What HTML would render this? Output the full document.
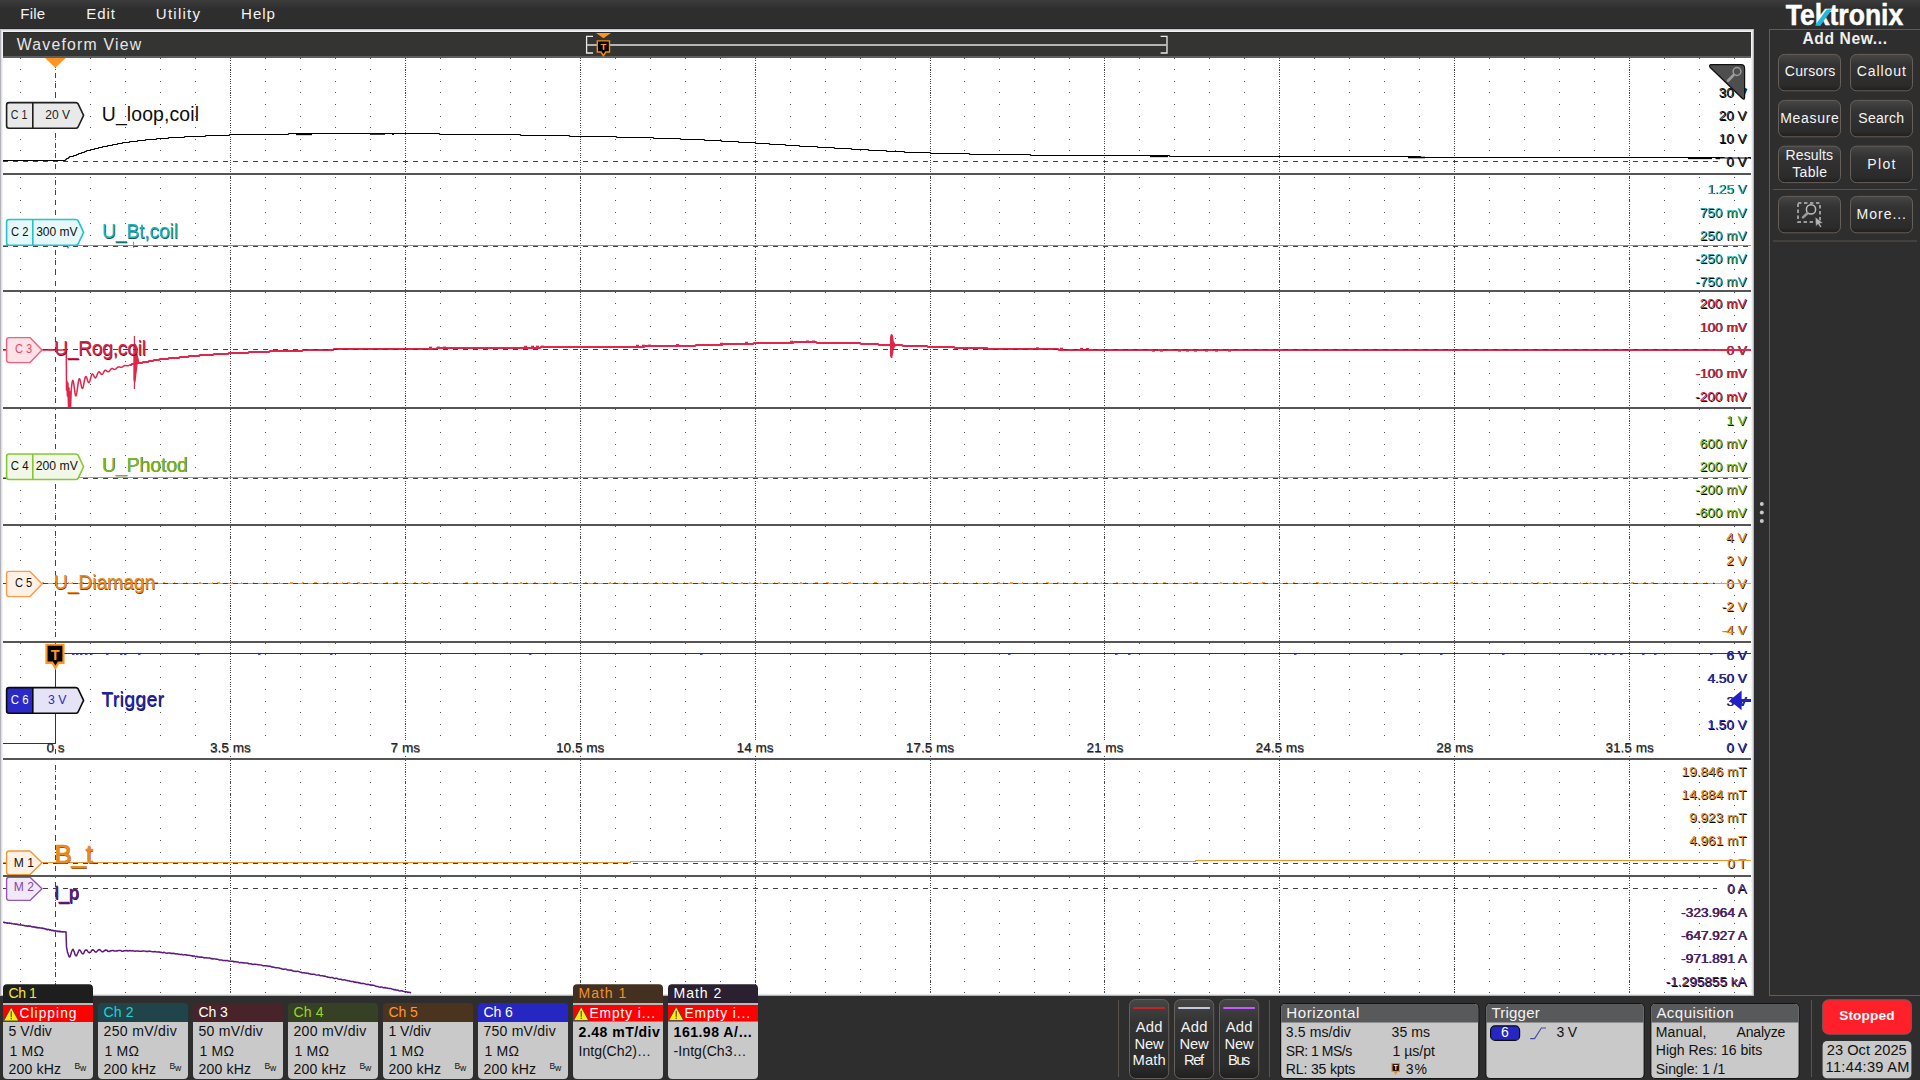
<!DOCTYPE html>
<html lang="en"><head><meta charset="utf-8"><title>Tektronix Waveform View</title>
<style>html,body{margin:0;padding:0;background:#2e2e2e;overflow:hidden}svg{display:block}text{font-family:'Liberation Sans', Arial, sans-serif;white-space:pre}</style></head><body>
<svg width="1920" height="1080" viewBox="0 0 1920 1080">
<defs>
<linearGradient id="btn" x1="0" y1="0" x2="0" y2="1"><stop offset="0" stop-color="#464646"/><stop offset="0.3" stop-color="#333333"/><stop offset="0.85" stop-color="#2b2b2b"/><stop offset="1" stop-color="#1f1f1f"/></linearGradient>
<linearGradient id="menu" x1="0" y1="0" x2="0" y2="1"><stop offset="0" stop-color="#3b3b3b"/><stop offset="0.32" stop-color="#2e2e2e"/><stop offset="1" stop-color="#2e2e2e"/></linearGradient>
<clipPath id="plotclip"><rect x="3" y="58" width="1748" height="936"/></clipPath>
<clipPath id="sc0"><rect x="3" y="58" width="1748" height="115"/></clipPath>
<clipPath id="sc1"><rect x="3" y="175" width="1748" height="115"/></clipPath>
<clipPath id="sc2"><rect x="3" y="292" width="1748" height="115"/></clipPath>
<clipPath id="sc3"><rect x="3" y="409" width="1748" height="115"/></clipPath>
<clipPath id="sc4"><rect x="3" y="526" width="1748" height="115"/></clipPath>
<clipPath id="sc5"><rect x="3" y="643" width="1748" height="115"/></clipPath>
<clipPath id="sc6"><rect x="3" y="760" width="1748" height="115"/></clipPath>
<clipPath id="sc7"><rect x="3" y="877" width="1748" height="117"/></clipPath>
</defs>
<rect x="0" y="0" width="1920" height="1080" fill="#2e2e2e"/>
<rect x="0" y="0" width="1920" height="29" fill="url(#menu)"/>
<g shape-rendering="crispEdges">
<rect x="0" y="28" width="1754" height="1" fill="#262626"/>
<rect x="0" y="29" width="1754" height="967" fill="#b2b2b8"/>
<rect x="1" y="30" width="1752" height="965" fill="#dfe1e4"/>
<rect x="2" y="31" width="1750" height="964" fill="#f1f3f5"/>
<rect x="0" y="29" width="1754" height="1" fill="#c8c8cc"/>
<rect x="3" y="32" width="1748" height="24" fill="#343432"/>
<rect x="3" y="32" width="1748" height="1" fill="#2a2a28"/>
<rect x="3" y="56" width="1748" height="2" fill="#5d5e60"/>
<rect x="3" y="58" width="1748" height="936" fill="#ffffff"/>
<rect x="3" y="994" width="1748" height="1" fill="#e4e6e8"/>
</g>
<g shape-rendering="crispEdges" clip-path="url(#plotclip)">
<line x1="20.02" y1="58.5" x2="1751" y2="58.5" stroke="#4a4a4a" stroke-width="1" stroke-dasharray="1 33.980"/>
<line x1="20.02" y1="69.5" x2="1751" y2="69.5" stroke="#4a4a4a" stroke-width="1" stroke-dasharray="1 33.980"/>
<line x1="20.02" y1="81.5" x2="1751" y2="81.5" stroke="#4a4a4a" stroke-width="1" stroke-dasharray="1 33.980"/>
<line x1="20.02" y1="92.5" x2="1751" y2="92.5" stroke="#4a4a4a" stroke-width="1" stroke-dasharray="1 33.980"/>
<line x1="20.02" y1="104.5" x2="1751" y2="104.5" stroke="#4a4a4a" stroke-width="1" stroke-dasharray="1 33.980"/>
<line x1="20.02" y1="116.5" x2="1751" y2="116.5" stroke="#4a4a4a" stroke-width="1" stroke-dasharray="1 33.980"/>
<line x1="20.02" y1="127.5" x2="1751" y2="127.5" stroke="#4a4a4a" stroke-width="1" stroke-dasharray="1 33.980"/>
<line x1="20.02" y1="139.5" x2="1751" y2="139.5" stroke="#4a4a4a" stroke-width="1" stroke-dasharray="1 33.980"/>
<line x1="20.02" y1="150.5" x2="1751" y2="150.5" stroke="#4a4a4a" stroke-width="1" stroke-dasharray="1 33.980"/>
<line x1="20.02" y1="177.5" x2="1751" y2="177.5" stroke="#4a4a4a" stroke-width="1" stroke-dasharray="1 33.980"/>
<line x1="20.02" y1="188.5" x2="1751" y2="188.5" stroke="#4a4a4a" stroke-width="1" stroke-dasharray="1 33.980"/>
<line x1="20.02" y1="200.5" x2="1751" y2="200.5" stroke="#4a4a4a" stroke-width="1" stroke-dasharray="1 33.980"/>
<line x1="20.02" y1="212.5" x2="1751" y2="212.5" stroke="#4a4a4a" stroke-width="1" stroke-dasharray="1 33.980"/>
<line x1="20.02" y1="223.5" x2="1751" y2="223.5" stroke="#4a4a4a" stroke-width="1" stroke-dasharray="1 33.980"/>
<line x1="20.02" y1="235.5" x2="1751" y2="235.5" stroke="#4a4a4a" stroke-width="1" stroke-dasharray="1 33.980"/>
<line x1="20.02" y1="258.5" x2="1751" y2="258.5" stroke="#4a4a4a" stroke-width="1" stroke-dasharray="1 33.980"/>
<line x1="20.02" y1="269.5" x2="1751" y2="269.5" stroke="#4a4a4a" stroke-width="1" stroke-dasharray="1 33.980"/>
<line x1="20.02" y1="281.5" x2="1751" y2="281.5" stroke="#4a4a4a" stroke-width="1" stroke-dasharray="1 33.980"/>
<line x1="20.02" y1="292.5" x2="1751" y2="292.5" stroke="#4a4a4a" stroke-width="1" stroke-dasharray="1 33.980"/>
<line x1="20.02" y1="303.5" x2="1751" y2="303.5" stroke="#4a4a4a" stroke-width="1" stroke-dasharray="1 33.980"/>
<line x1="20.02" y1="315.5" x2="1751" y2="315.5" stroke="#4a4a4a" stroke-width="1" stroke-dasharray="1 33.980"/>
<line x1="20.02" y1="326.5" x2="1751" y2="326.5" stroke="#4a4a4a" stroke-width="1" stroke-dasharray="1 33.980"/>
<line x1="20.02" y1="338.5" x2="1751" y2="338.5" stroke="#4a4a4a" stroke-width="1" stroke-dasharray="1 33.980"/>
<line x1="20.02" y1="361.5" x2="1751" y2="361.5" stroke="#4a4a4a" stroke-width="1" stroke-dasharray="1 33.980"/>
<line x1="20.02" y1="373.5" x2="1751" y2="373.5" stroke="#4a4a4a" stroke-width="1" stroke-dasharray="1 33.980"/>
<line x1="20.02" y1="384.5" x2="1751" y2="384.5" stroke="#4a4a4a" stroke-width="1" stroke-dasharray="1 33.980"/>
<line x1="20.02" y1="396.5" x2="1751" y2="396.5" stroke="#4a4a4a" stroke-width="1" stroke-dasharray="1 33.980"/>
<line x1="20.02" y1="409.5" x2="1751" y2="409.5" stroke="#4a4a4a" stroke-width="1" stroke-dasharray="1 33.980"/>
<line x1="20.02" y1="420.5" x2="1751" y2="420.5" stroke="#4a4a4a" stroke-width="1" stroke-dasharray="1 33.980"/>
<line x1="20.02" y1="432.5" x2="1751" y2="432.5" stroke="#4a4a4a" stroke-width="1" stroke-dasharray="1 33.980"/>
<line x1="20.02" y1="444.5" x2="1751" y2="444.5" stroke="#4a4a4a" stroke-width="1" stroke-dasharray="1 33.980"/>
<line x1="20.02" y1="455.5" x2="1751" y2="455.5" stroke="#4a4a4a" stroke-width="1" stroke-dasharray="1 33.980"/>
<line x1="20.02" y1="467.5" x2="1751" y2="467.5" stroke="#4a4a4a" stroke-width="1" stroke-dasharray="1 33.980"/>
<line x1="20.02" y1="490.5" x2="1751" y2="490.5" stroke="#4a4a4a" stroke-width="1" stroke-dasharray="1 33.980"/>
<line x1="20.02" y1="501.5" x2="1751" y2="501.5" stroke="#4a4a4a" stroke-width="1" stroke-dasharray="1 33.980"/>
<line x1="20.02" y1="513.5" x2="1751" y2="513.5" stroke="#4a4a4a" stroke-width="1" stroke-dasharray="1 33.980"/>
<line x1="20.02" y1="526.5" x2="1751" y2="526.5" stroke="#4a4a4a" stroke-width="1" stroke-dasharray="1 33.980"/>
<line x1="20.02" y1="537.5" x2="1751" y2="537.5" stroke="#4a4a4a" stroke-width="1" stroke-dasharray="1 33.980"/>
<line x1="20.02" y1="549.5" x2="1751" y2="549.5" stroke="#4a4a4a" stroke-width="1" stroke-dasharray="1 33.980"/>
<line x1="20.02" y1="560.5" x2="1751" y2="560.5" stroke="#4a4a4a" stroke-width="1" stroke-dasharray="1 33.980"/>
<line x1="20.02" y1="572.5" x2="1751" y2="572.5" stroke="#4a4a4a" stroke-width="1" stroke-dasharray="1 33.980"/>
<line x1="20.02" y1="595.5" x2="1751" y2="595.5" stroke="#4a4a4a" stroke-width="1" stroke-dasharray="1 33.980"/>
<line x1="20.02" y1="606.5" x2="1751" y2="606.5" stroke="#4a4a4a" stroke-width="1" stroke-dasharray="1 33.980"/>
<line x1="20.02" y1="618.5" x2="1751" y2="618.5" stroke="#4a4a4a" stroke-width="1" stroke-dasharray="1 33.980"/>
<line x1="20.02" y1="629.5" x2="1751" y2="629.5" stroke="#4a4a4a" stroke-width="1" stroke-dasharray="1 33.980"/>
<line x1="20.02" y1="643.5" x2="1751" y2="643.5" stroke="#4a4a4a" stroke-width="1" stroke-dasharray="1 33.980"/>
<line x1="20.02" y1="654.5" x2="1751" y2="654.5" stroke="#4a4a4a" stroke-width="1" stroke-dasharray="1 33.980"/>
<line x1="20.02" y1="666.5" x2="1751" y2="666.5" stroke="#4a4a4a" stroke-width="1" stroke-dasharray="1 33.980"/>
<line x1="20.02" y1="677.5" x2="1751" y2="677.5" stroke="#4a4a4a" stroke-width="1" stroke-dasharray="1 33.980"/>
<line x1="20.02" y1="689.5" x2="1751" y2="689.5" stroke="#4a4a4a" stroke-width="1" stroke-dasharray="1 33.980"/>
<line x1="20.02" y1="701.5" x2="1751" y2="701.5" stroke="#4a4a4a" stroke-width="1" stroke-dasharray="1 33.980"/>
<line x1="20.02" y1="712.5" x2="1751" y2="712.5" stroke="#4a4a4a" stroke-width="1" stroke-dasharray="1 33.980"/>
<line x1="20.02" y1="724.5" x2="1751" y2="724.5" stroke="#4a4a4a" stroke-width="1" stroke-dasharray="1 33.980"/>
<line x1="20.02" y1="735.5" x2="1751" y2="735.5" stroke="#4a4a4a" stroke-width="1" stroke-dasharray="1 33.980"/>
<line x1="20.02" y1="771.5" x2="1751" y2="771.5" stroke="#4a4a4a" stroke-width="1" stroke-dasharray="1 33.980"/>
<line x1="20.02" y1="782.5" x2="1751" y2="782.5" stroke="#4a4a4a" stroke-width="1" stroke-dasharray="1 33.980"/>
<line x1="20.02" y1="794.5" x2="1751" y2="794.5" stroke="#4a4a4a" stroke-width="1" stroke-dasharray="1 33.980"/>
<line x1="20.02" y1="805.5" x2="1751" y2="805.5" stroke="#4a4a4a" stroke-width="1" stroke-dasharray="1 33.980"/>
<line x1="20.02" y1="817.5" x2="1751" y2="817.5" stroke="#4a4a4a" stroke-width="1" stroke-dasharray="1 33.980"/>
<line x1="20.02" y1="828.5" x2="1751" y2="828.5" stroke="#4a4a4a" stroke-width="1" stroke-dasharray="1 33.980"/>
<line x1="20.02" y1="840.5" x2="1751" y2="840.5" stroke="#4a4a4a" stroke-width="1" stroke-dasharray="1 33.980"/>
<line x1="20.02" y1="852.5" x2="1751" y2="852.5" stroke="#4a4a4a" stroke-width="1" stroke-dasharray="1 33.980"/>
<line x1="20.02" y1="877.5" x2="1751" y2="877.5" stroke="#4a4a4a" stroke-width="1" stroke-dasharray="1 33.980"/>
<line x1="20.02" y1="900.5" x2="1751" y2="900.5" stroke="#4a4a4a" stroke-width="1" stroke-dasharray="1 33.980"/>
<line x1="20.02" y1="911.5" x2="1751" y2="911.5" stroke="#4a4a4a" stroke-width="1" stroke-dasharray="1 33.980"/>
<line x1="20.02" y1="923.5" x2="1751" y2="923.5" stroke="#4a4a4a" stroke-width="1" stroke-dasharray="1 33.980"/>
<line x1="20.02" y1="934.5" x2="1751" y2="934.5" stroke="#4a4a4a" stroke-width="1" stroke-dasharray="1 33.980"/>
<line x1="20.02" y1="946.5" x2="1751" y2="946.5" stroke="#4a4a4a" stroke-width="1" stroke-dasharray="1 33.980"/>
<line x1="20.02" y1="958.5" x2="1751" y2="958.5" stroke="#4a4a4a" stroke-width="1" stroke-dasharray="1 33.980"/>
<line x1="20.02" y1="969.5" x2="1751" y2="969.5" stroke="#4a4a4a" stroke-width="1" stroke-dasharray="1 33.980"/>
<line x1="20.02" y1="981.5" x2="1751" y2="981.5" stroke="#4a4a4a" stroke-width="1" stroke-dasharray="1 33.980"/>
<line x1="20.02" y1="992.5" x2="1751" y2="992.5" stroke="#4a4a4a" stroke-width="1" stroke-dasharray="1 33.980"/>
<line x1="230.5" y1="58" x2="230.5" y2="994" stroke="#444444" stroke-width="1" stroke-dasharray="1 1.31"/>
<line x1="405.5" y1="58" x2="405.5" y2="994" stroke="#444444" stroke-width="1" stroke-dasharray="1 1.31"/>
<line x1="580.5" y1="58" x2="580.5" y2="994" stroke="#444444" stroke-width="1" stroke-dasharray="1 1.31"/>
<line x1="755.5" y1="58" x2="755.5" y2="994" stroke="#444444" stroke-width="1" stroke-dasharray="1 1.31"/>
<line x1="930.5" y1="58" x2="930.5" y2="994" stroke="#444444" stroke-width="1" stroke-dasharray="1 1.31"/>
<line x1="1104.5" y1="58" x2="1104.5" y2="994" stroke="#444444" stroke-width="1" stroke-dasharray="1 1.31"/>
<line x1="1279.5" y1="58" x2="1279.5" y2="994" stroke="#444444" stroke-width="1" stroke-dasharray="1 1.31"/>
<line x1="1454.5" y1="58" x2="1454.5" y2="994" stroke="#444444" stroke-width="1" stroke-dasharray="1 1.31"/>
<line x1="1629.5" y1="58" x2="1629.5" y2="994" stroke="#444444" stroke-width="1" stroke-dasharray="1 1.31"/>
<line x1="55.5" y1="63" x2="55.5" y2="173" stroke="#444" stroke-width="1" stroke-dasharray="5 5.05"/>
<line x1="55.5" y1="180" x2="55.5" y2="290" stroke="#444" stroke-width="1" stroke-dasharray="5 5.05"/>
<line x1="55.5" y1="297" x2="55.5" y2="407" stroke="#444" stroke-width="1" stroke-dasharray="5 5.05"/>
<line x1="55.5" y1="414" x2="55.5" y2="524" stroke="#444" stroke-width="1" stroke-dasharray="5 5.05"/>
<line x1="55.5" y1="531" x2="55.5" y2="641" stroke="#444" stroke-width="1" stroke-dasharray="5 5.05"/>
<line x1="55.5" y1="648" x2="55.5" y2="758" stroke="#444" stroke-width="1" stroke-dasharray="5 5.05"/>
<line x1="55.5" y1="765" x2="55.5" y2="875" stroke="#444" stroke-width="1" stroke-dasharray="5 5.05"/>
<line x1="55.5" y1="882" x2="55.5" y2="994" stroke="#444" stroke-width="1" stroke-dasharray="5 5.05"/>
</g>
<g shape-rendering="crispEdges">
<rect x="3" y="173" width="1748" height="2" fill="#555555"/>
<rect x="3" y="290" width="1748" height="2" fill="#555555"/>
<rect x="3" y="407" width="1748" height="2" fill="#555555"/>
<rect x="3" y="524" width="1748" height="2" fill="#555555"/>
<rect x="3" y="641" width="1748" height="2" fill="#555555"/>
<rect x="3" y="758" width="1748" height="2" fill="#555555"/>
<rect x="3" y="875" width="1748" height="2" fill="#555555"/>
</g>
<polyline points="3.0,160.50 4.0,160.50 5.0,160.50 6.0,160.50 7.0,160.50 8.0,160.50 9.0,160.50 10.0,160.50 11.0,160.50 12.0,160.50 13.0,160.50 14.0,160.50 15.0,160.50 16.0,160.50 17.0,160.50 18.0,160.50 19.0,160.50 20.0,160.50 21.0,160.50 22.0,160.50 23.0,160.50 24.0,160.50 25.0,160.50 26.0,160.50 27.0,160.50 28.0,160.50 29.0,160.50 30.0,160.50 31.0,160.50 32.0,160.50 33.0,160.50 34.0,160.50 35.0,160.50 36.0,160.50 37.0,160.50 38.0,160.50 39.0,160.50 40.0,160.50 41.0,160.50 42.0,160.50 43.0,160.50 44.0,160.50 45.0,160.50 46.0,160.50 47.0,160.50 48.0,160.50 49.0,160.50 50.0,160.50 51.0,160.50 52.0,160.50 53.0,160.50 54.0,160.50 55.0,160.50 56.0,160.50 57.0,160.50 58.0,160.50 59.0,160.50 60.0,160.50 61.0,160.50 62.0,160.50 63.0,160.50 64.0,160.50 65.0,160.50 66.0,159.50 67.0,158.50 68.0,158.50 69.0,157.50 70.0,156.50 71.0,156.50 72.0,156.50 73.0,156.50 74.0,155.50 75.0,155.50 76.0,155.50 77.0,154.50 78.0,154.50 79.0,153.50 80.0,153.50 81.0,153.50 82.0,152.50 83.0,152.50 84.0,152.50 85.0,151.50 86.0,151.50 87.0,150.50 88.0,150.50 89.0,150.50 90.0,150.50 91.0,149.50 92.0,149.50 93.0,149.50 94.0,149.50 95.0,148.50 96.0,148.50 97.0,148.50 98.0,148.50 99.0,147.50 100.0,147.50 101.0,147.50 102.0,147.50 103.0,146.50 104.0,146.50 105.0,146.50 106.0,146.50 107.0,146.50 108.0,145.50 109.0,145.50 110.0,145.50 111.0,145.50 112.0,145.50 113.0,144.50 114.0,144.50 115.0,144.50 116.0,144.50 117.0,144.50 118.0,143.50 119.0,143.50 120.0,143.50 121.0,143.50 122.0,143.50 123.0,142.50 124.0,142.50 125.0,142.50 126.0,142.50 127.0,142.50 128.0,142.50 129.0,142.50 130.0,141.50 131.0,141.50 132.0,141.50 133.0,141.50 134.0,141.50 135.0,141.50 136.0,141.50 137.0,141.50 138.0,140.50 139.0,140.50 140.0,140.50 141.0,140.50 142.0,140.50 143.0,140.50 144.0,140.50 145.0,140.50 146.0,139.50 147.0,139.50 148.0,139.50 149.0,139.50 150.0,139.50 151.0,139.50 152.0,139.50 153.0,139.50 154.0,139.50 155.0,139.50 156.0,139.50 157.0,138.50 158.0,138.50 159.0,138.50 160.0,138.50 161.0,138.50 162.0,138.50 163.0,138.50 164.0,138.50 165.0,138.50 166.0,138.50 167.0,138.50 168.0,138.50 169.0,137.50 170.0,137.50 171.0,137.50 172.0,137.50 173.0,137.50 174.0,137.50 175.0,137.50 176.0,137.50 177.0,137.50 178.0,137.50 179.0,137.50 180.0,137.50 181.0,137.50 182.0,137.50 183.0,137.50 184.0,137.50 185.0,136.50 186.0,136.50 187.0,136.50 188.0,136.50 189.0,136.50 190.0,136.50 191.0,136.50 192.0,136.50 193.0,136.50 194.0,136.50 195.0,136.50 196.0,136.50 197.0,136.50 198.0,136.50 199.0,136.50 200.0,136.50 201.0,136.50 202.0,136.50 203.0,136.50 204.0,136.50 205.0,136.50 206.0,135.50 207.0,135.50 208.0,135.50 209.0,135.50 210.0,135.50 211.0,135.50 212.0,135.50 213.0,135.50 214.0,135.50 215.0,135.50 216.0,135.50 217.0,135.50 218.0,135.50 219.0,135.50 220.0,135.50 221.0,135.50 222.0,135.50 223.0,135.50 224.0,135.50 225.0,135.50 226.0,135.50 227.0,135.50 228.0,135.50 229.0,135.50 230.0,134.50 231.0,134.50 232.0,134.50 233.0,134.50 234.0,134.50 235.0,134.50 236.0,134.50 237.0,134.50 238.0,134.50 239.0,134.50 240.0,134.50 241.0,134.50 242.0,134.50 243.0,134.50 244.0,134.50 245.0,134.50 246.0,134.50 247.0,134.50 248.0,134.50 249.0,134.50 250.0,134.50 251.0,134.50 252.0,134.50 253.0,134.50 254.0,134.50 255.0,134.50 256.0,134.50 257.0,134.50 258.0,134.50 259.0,134.50 260.0,134.50 261.0,134.50 262.0,134.50 263.0,134.50 264.0,134.50 265.0,134.50 266.0,134.50 267.0,134.50 268.0,134.50 269.0,134.50 270.0,134.50 271.0,134.50 272.0,134.50 273.0,134.50 274.0,134.50 275.0,134.50 276.0,134.50 277.0,134.50 278.0,134.50 279.0,134.50 280.0,134.50 281.0,134.50 282.0,134.50 283.0,134.50 284.0,134.50 285.0,134.50 286.0,134.50 287.0,134.50 288.0,134.50 289.0,133.50 290.0,133.50 291.0,133.50 292.0,133.50 293.0,133.50 294.0,133.50 295.0,133.50 296.0,133.50 297.0,133.50 298.0,133.50 299.0,133.50 300.0,133.50 301.0,133.50 302.0,133.50 303.0,133.50 304.0,133.50 305.0,133.50 306.0,133.50 307.0,133.50 308.0,133.50 309.0,133.50 310.0,133.50 311.0,133.50 312.0,133.50 313.0,133.50 314.0,133.50 315.0,133.50 316.0,133.50 317.0,133.50 318.0,133.50 319.0,133.50 320.0,133.50 321.0,133.50 322.0,133.50 323.0,133.50 324.0,133.50 325.0,133.50 326.0,133.50 327.0,133.50 328.0,133.50 329.0,133.50 330.0,133.50 331.0,133.50 332.0,133.50 333.0,133.50 334.0,133.50 335.0,133.50 336.0,133.50 337.0,133.50 338.0,133.50 339.0,133.50 340.0,133.50 341.0,133.50 342.0,133.50 343.0,133.50 344.0,133.50 345.0,133.50 346.0,133.50 347.0,133.50 348.0,133.50 349.0,133.50 350.0,133.50 351.0,133.50 352.0,133.50 353.0,133.50 354.0,133.50 355.0,133.50 356.0,133.50 357.0,133.50 358.0,133.50 359.0,133.50 360.0,133.50 361.0,133.50 362.0,133.50 363.0,133.50 364.0,133.50 365.0,133.50 366.0,133.50 367.0,133.50 368.0,133.50 369.0,133.50 370.0,133.50 371.0,133.50 372.0,133.50 373.0,133.50 374.0,133.50 375.0,133.50 376.0,133.50 377.0,133.50 378.0,133.50 379.0,133.50 380.0,133.50 381.0,133.50 382.0,133.50 383.0,133.50 384.0,133.50 385.0,133.50 386.0,133.50 387.0,133.50 388.0,133.50 389.0,133.50 390.0,133.50 391.0,133.50 392.0,133.50 393.0,133.50 394.0,133.50 395.0,133.50 396.0,133.50 397.0,133.50 398.0,133.50 399.0,133.50 400.0,133.50 401.0,133.50 402.0,133.50 403.0,133.50 404.0,133.50 405.0,133.50 406.0,133.50 407.0,133.50 408.0,133.50 409.0,133.50 410.0,133.50 411.0,133.50 412.0,133.50 413.0,133.50 414.0,133.50 415.0,133.50 416.0,133.50 417.0,133.50 418.0,133.50 419.0,133.50 420.0,133.50 421.0,133.50 422.0,133.50 423.0,133.50 424.0,133.50 425.0,133.50 426.0,133.50 427.0,133.50 428.0,133.50 429.0,133.50 430.0,133.50 431.0,133.50 432.0,133.50 433.0,133.50 434.0,133.50 435.0,133.50 436.0,133.50 437.0,133.50 438.0,133.50 439.0,133.50 440.0,134.50 441.0,134.50 442.0,134.50 443.0,134.50 444.0,134.50 445.0,134.50 446.0,134.50 447.0,134.50 448.0,134.50 449.0,134.50 450.0,134.50 451.0,134.50 452.0,134.50 453.0,134.50 454.0,134.50 455.0,134.50 456.0,134.50 457.0,134.50 458.0,134.50 459.0,134.50 460.0,134.50 461.0,134.50 462.0,134.50 463.0,134.50 464.0,134.50 465.0,134.50 466.0,134.50 467.0,134.50 468.0,134.50 469.0,134.50 470.0,134.50 471.0,134.50 472.0,134.50 473.0,134.50 474.0,134.50 475.0,134.50 476.0,134.50 477.0,134.50 478.0,134.50 479.0,134.50 480.0,134.50 481.0,134.50 482.0,134.50 483.0,134.50 484.0,134.50 485.0,134.50 486.0,134.50 487.0,134.50 488.0,134.50 489.0,134.50 490.0,134.50 491.0,134.50 492.0,134.50 493.0,134.50 494.0,134.50 495.0,134.50 496.0,134.50 497.0,134.50 498.0,134.50 499.0,134.50 500.0,134.50 501.0,134.50 502.0,134.50 503.0,134.50 504.0,134.50 505.0,134.50 506.0,134.50 507.0,134.50 508.0,134.50 509.0,134.50 510.0,134.50 511.0,134.50 512.0,134.50 513.0,134.50 514.0,134.50 515.0,134.50 516.0,134.50 517.0,134.50 518.0,134.50 519.0,134.50 520.0,134.50 521.0,135.50 522.0,135.50 523.0,135.50 524.0,135.50 525.0,135.50 526.0,135.50 527.0,135.50 528.0,135.50 529.0,135.50 530.0,135.50 531.0,135.50 532.0,135.50 533.0,135.50 534.0,135.50 535.0,135.50 536.0,135.50 537.0,135.50 538.0,135.50 539.0,135.50 540.0,135.50 541.0,135.50 542.0,135.50 543.0,135.50 544.0,135.50 545.0,135.50 546.0,135.50 547.0,135.50 548.0,135.50 549.0,135.50 550.0,135.50 551.0,135.50 552.0,135.50 553.0,135.50 554.0,135.50 555.0,135.50 556.0,135.50 557.0,135.50 558.0,135.50 559.0,135.50 560.0,135.50 561.0,135.50 562.0,135.50 563.0,135.50 564.0,135.50 565.0,135.50 566.0,135.50 567.0,135.50 568.0,135.50 569.0,135.50 570.0,136.50 571.0,136.50 572.0,136.50 573.0,136.50 574.0,136.50 575.0,136.50 576.0,136.50 577.0,136.50 578.0,136.50 579.0,136.50 580.0,136.50 581.0,136.50 582.0,136.50 583.0,136.50 584.0,136.50 585.0,136.50 586.0,136.50 587.0,136.50 588.0,136.50 589.0,136.50 590.0,136.50 591.0,136.50 592.0,136.50 593.0,136.50 594.0,136.50 595.0,136.50 596.0,136.50 597.0,136.50 598.0,136.50 599.0,136.50 600.0,136.50 601.0,136.50 602.0,136.50 603.0,136.50 604.0,136.50 605.0,136.50 606.0,136.50 607.0,136.50 608.0,136.50 609.0,136.50 610.0,136.50 611.0,136.50 612.0,136.50 613.0,136.50 614.0,136.50 615.0,136.50 616.0,136.50 617.0,137.50 618.0,137.50 619.0,137.50 620.0,137.50 621.0,137.50 622.0,137.50 623.0,137.50 624.0,137.50 625.0,137.50 626.0,137.50 627.0,137.50 628.0,137.50 629.0,137.50 630.0,137.50 631.0,137.50 632.0,137.50 633.0,137.50 634.0,137.50 635.0,137.50 636.0,137.50 637.0,137.50 638.0,137.50 639.0,137.50 640.0,137.50 641.0,137.50 642.0,137.50 643.0,137.50 644.0,137.50 645.0,137.50 646.0,137.50 647.0,137.50 648.0,137.50 649.0,137.50 650.0,137.50 651.0,137.50 652.0,137.50 653.0,137.50 654.0,138.50 655.0,138.50 656.0,138.50 657.0,138.50 658.0,138.50 659.0,138.50 660.0,138.50 661.0,138.50 662.0,138.50 663.0,138.50 664.0,138.50 665.0,138.50 666.0,138.50 667.0,138.50 668.0,138.50 669.0,138.50 670.0,138.50 671.0,138.50 672.0,138.50 673.0,138.50 674.0,138.50 675.0,138.50 676.0,138.50 677.0,138.50 678.0,138.50 679.0,138.50 680.0,138.50 681.0,139.50 682.0,139.50 683.0,139.50 684.0,139.50 685.0,139.50 686.0,139.50 687.0,139.50 688.0,139.50 689.0,139.50 690.0,139.50 691.0,139.50 692.0,139.50 693.0,139.50 694.0,139.50 695.0,139.50 696.0,139.50 697.0,139.50 698.0,139.50 699.0,139.50 700.0,139.50 701.0,139.50 702.0,139.50 703.0,139.50 704.0,139.50 705.0,140.50 706.0,140.50 707.0,140.50 708.0,140.50 709.0,140.50 710.0,140.50 711.0,140.50 712.0,140.50 713.0,140.50 714.0,140.50 715.0,140.50 716.0,140.50 717.0,140.50 718.0,140.50 719.0,140.50 720.0,140.50 721.0,140.50 722.0,141.50 723.0,141.50 724.0,141.50 725.0,141.50 726.0,141.50 727.0,141.50 728.0,141.50 729.0,141.50 730.0,141.50 731.0,141.50 732.0,141.50 733.0,141.50 734.0,141.50 735.0,141.50 736.0,141.50 737.0,141.50 738.0,141.50 739.0,142.50 740.0,142.50 741.0,142.50 742.0,142.50 743.0,142.50 744.0,142.50 745.0,142.50 746.0,142.50 747.0,142.50 748.0,142.50 749.0,142.50 750.0,142.50 751.0,142.50 752.0,142.50 753.0,142.50 754.0,142.50 755.0,142.50 756.0,143.50 757.0,143.50 758.0,143.50 759.0,143.50 760.0,143.50 761.0,143.50 762.0,143.50 763.0,143.50 764.0,143.50 765.0,143.50 766.0,143.50 767.0,143.50 768.0,143.50 769.0,143.50 770.0,144.50 771.0,144.50 772.0,144.50 773.0,144.50 774.0,144.50 775.0,144.50 776.0,144.50 777.0,144.50 778.0,144.50 779.0,144.50 780.0,144.50 781.0,144.50 782.0,144.50 783.0,144.50 784.0,144.50 785.0,144.50 786.0,145.50 787.0,145.50 788.0,145.50 789.0,145.50 790.0,145.50 791.0,145.50 792.0,145.50 793.0,145.50 794.0,145.50 795.0,145.50 796.0,145.50 797.0,145.50 798.0,145.50 799.0,145.50 800.0,146.50 801.0,146.50 802.0,146.50 803.0,146.50 804.0,146.50 805.0,146.50 806.0,146.50 807.0,146.50 808.0,146.50 809.0,146.50 810.0,146.50 811.0,146.50 812.0,146.50 813.0,146.50 814.0,146.50 815.0,146.50 816.0,146.50 817.0,146.50 818.0,147.50 819.0,147.50 820.0,147.50 821.0,147.50 822.0,147.50 823.0,147.50 824.0,147.50 825.0,147.50 826.0,147.50 827.0,147.50 828.0,147.50 829.0,147.50 830.0,147.50 831.0,147.50 832.0,147.50 833.0,147.50 834.0,147.50 835.0,148.50 836.0,148.50 837.0,148.50 838.0,148.50 839.0,148.50 840.0,148.50 841.0,148.50 842.0,148.50 843.0,148.50 844.0,148.50 845.0,148.50 846.0,148.50 847.0,148.50 848.0,148.50 849.0,148.50 850.0,148.50 851.0,148.50 852.0,149.50 853.0,149.50 854.0,149.50 855.0,149.50 856.0,149.50 857.0,149.50 858.0,149.50 859.0,149.50 860.0,149.50 861.0,149.50 862.0,149.50 863.0,149.50 864.0,149.50 865.0,149.50 866.0,149.50 867.0,149.50 868.0,149.50 869.0,150.50 870.0,150.50 871.0,150.50 872.0,150.50 873.0,150.50 874.0,150.50 875.0,150.50 876.0,150.50 877.0,150.50 878.0,150.50 879.0,150.50 880.0,150.50 881.0,150.50 882.0,150.50 883.0,150.50 884.0,150.50 885.0,150.50 886.0,150.50 887.0,151.50 888.0,151.50 889.0,151.50 890.0,151.50 891.0,151.50 892.0,151.50 893.0,151.50 894.0,151.50 895.0,151.50 896.0,151.50 897.0,151.50 898.0,151.50 899.0,151.50 900.0,151.50 901.0,151.50 902.0,151.50 903.0,151.50 904.0,151.50 905.0,152.50 906.0,152.50 907.0,152.50 908.0,152.50 909.0,152.50 910.0,152.50 911.0,152.50 912.0,152.50 913.0,152.50 914.0,152.50 915.0,152.50 916.0,152.50 917.0,152.50 918.0,152.50 919.0,152.50 920.0,152.50 921.0,152.50 922.0,152.50 923.0,152.50 924.0,152.50 925.0,152.50 926.0,152.50 927.0,152.50 928.0,152.50 929.0,152.50 930.0,152.50 931.0,153.50 932.0,153.50 933.0,153.50 934.0,153.50 935.0,153.50 936.0,153.50 937.0,153.50 938.0,153.50 939.0,153.50 940.0,153.50 941.0,153.50 942.0,153.50 943.0,153.50 944.0,153.50 945.0,153.50 946.0,153.50 947.0,153.50 948.0,153.50 949.0,153.50 950.0,153.50 951.0,153.50 952.0,153.50 953.0,153.50 954.0,153.50 955.0,153.50 956.0,153.50 957.0,153.50 958.0,153.50 959.0,153.50 960.0,153.50 961.0,153.50 962.0,153.50 963.0,153.50 964.0,153.50 965.0,153.50 966.0,153.50 967.0,153.50 968.0,153.50 969.0,153.50 970.0,154.50 971.0,154.50 972.0,154.50 973.0,154.50 974.0,154.50 975.0,154.50 976.0,154.50 977.0,154.50 978.0,154.50 979.0,154.50 980.0,154.50 981.0,154.50 982.0,154.50 983.0,154.50 984.0,154.50 985.0,154.50 986.0,154.50 987.0,154.50 988.0,154.50 989.0,154.50 990.0,154.50 991.0,154.50 992.0,154.50 993.0,154.50 994.0,154.50 995.0,154.50 996.0,154.50 997.0,154.50 998.0,154.50 999.0,154.50 1000.0,154.50 1001.0,154.50 1002.0,154.50 1003.0,154.50 1004.0,154.50 1005.0,154.50 1006.0,154.50 1007.0,154.50 1008.0,154.50 1009.0,154.50 1010.0,154.50 1011.0,154.50 1012.0,154.50 1013.0,154.50 1014.0,154.50 1015.0,154.50 1016.0,154.50 1017.0,154.50 1018.0,154.50 1019.0,154.50 1020.0,154.50 1021.0,154.50 1022.0,154.50 1023.0,154.50 1024.0,154.50 1025.0,154.50 1026.0,154.50 1027.0,154.50 1028.0,154.50 1029.0,154.50 1030.0,154.50 1031.0,155.50 1032.0,155.50 1033.0,155.50 1034.0,155.50 1035.0,155.50 1036.0,155.50 1037.0,155.50 1038.0,155.50 1039.0,155.50 1040.0,155.50 1041.0,155.50 1042.0,155.50 1043.0,155.50 1044.0,155.50 1045.0,155.50 1046.0,155.50 1047.0,155.50 1048.0,155.50 1049.0,155.50 1050.0,155.50 1051.0,155.50 1052.0,155.50 1053.0,155.50 1054.0,155.50 1055.0,155.50 1056.0,155.50 1057.0,155.50 1058.0,155.50 1059.0,155.50 1060.0,155.50 1061.0,155.50 1062.0,155.50 1063.0,155.50 1064.0,155.50 1065.0,155.50 1066.0,155.50 1067.0,155.50 1068.0,155.50 1069.0,155.50 1070.0,155.50 1071.0,155.50 1072.0,155.50 1073.0,155.50 1074.0,155.50 1075.0,155.50 1076.0,155.50 1077.0,155.50 1078.0,155.50 1079.0,155.50 1080.0,155.50 1081.0,155.50 1082.0,155.50 1083.0,155.50 1084.0,155.50 1085.0,155.50 1086.0,155.50 1087.0,155.50 1088.0,155.50 1089.0,155.50 1090.0,155.50 1091.0,155.50 1092.0,155.50 1093.0,155.50 1094.0,155.50 1095.0,155.50 1096.0,155.50 1097.0,155.50 1098.0,155.50 1099.0,155.50 1100.0,155.50 1101.0,155.50 1102.0,155.50 1103.0,155.50 1104.0,155.50 1105.0,155.50 1106.0,155.50 1107.0,155.50 1108.0,155.50 1109.0,155.50 1110.0,155.50 1111.0,155.50 1112.0,155.50 1113.0,155.50 1114.0,155.50 1115.0,155.50 1116.0,155.50 1117.0,155.50 1118.0,155.50 1119.0,155.50 1120.0,155.50 1121.0,155.50 1122.0,155.50 1123.0,155.50 1124.0,155.50 1125.0,155.50 1126.0,155.50 1127.0,155.50 1128.0,155.50 1129.0,155.50 1130.0,155.50 1131.0,155.50 1132.0,155.50 1133.0,155.50 1134.0,155.50 1135.0,155.50 1136.0,155.50 1137.0,155.50 1138.0,155.50 1139.0,155.50 1140.0,155.50 1141.0,155.50 1142.0,155.50 1143.0,155.50 1144.0,155.50 1145.0,155.50 1146.0,155.50 1147.0,155.50 1148.0,155.50 1149.0,155.50 1150.0,155.50 1151.0,155.50 1152.0,155.50 1153.0,155.50 1154.0,155.50 1155.0,155.50 1156.0,155.50 1157.0,155.50 1158.0,155.50 1159.0,155.50 1160.0,155.50 1161.0,155.50 1162.0,155.50 1163.0,155.50 1164.0,155.50 1165.0,155.50 1166.0,155.50 1167.0,155.50 1168.0,155.50 1169.0,155.50 1170.0,156.50 1171.0,156.50 1172.0,156.50 1173.0,156.50 1174.0,156.50 1175.0,156.50 1176.0,156.50 1177.0,156.50 1178.0,156.50 1179.0,156.50 1180.0,156.50 1181.0,156.50 1182.0,156.50 1183.0,156.50 1184.0,156.50 1185.0,156.50 1186.0,156.50 1187.0,156.50 1188.0,156.50 1189.0,156.50 1190.0,156.50 1191.0,156.50 1192.0,156.50 1193.0,156.50 1194.0,156.50 1195.0,156.50 1196.0,156.50 1197.0,156.50 1198.0,156.50 1199.0,156.50 1200.0,156.50 1201.0,156.50 1202.0,156.50 1203.0,156.50 1204.0,156.50 1205.0,156.50 1206.0,156.50 1207.0,156.50 1208.0,156.50 1209.0,156.50 1210.0,156.50 1211.0,156.50 1212.0,156.50 1213.0,156.50 1214.0,156.50 1215.0,156.50 1216.0,156.50 1217.0,156.50 1218.0,156.50 1219.0,156.50 1220.0,156.50 1221.0,156.50 1222.0,156.50 1223.0,156.50 1224.0,156.50 1225.0,156.50 1226.0,156.50 1227.0,156.50 1228.0,156.50 1229.0,156.50 1230.0,156.50 1231.0,156.50 1232.0,156.50 1233.0,156.50 1234.0,156.50 1235.0,156.50 1236.0,156.50 1237.0,156.50 1238.0,156.50 1239.0,156.50 1240.0,156.50 1241.0,156.50 1242.0,156.50 1243.0,156.50 1244.0,156.50 1245.0,156.50 1246.0,156.50 1247.0,156.50 1248.0,156.50 1249.0,156.50 1250.0,156.50 1251.0,156.50 1252.0,156.50 1253.0,156.50 1254.0,156.50 1255.0,156.50 1256.0,156.50 1257.0,156.50 1258.0,156.50 1259.0,156.50 1260.0,156.50 1261.0,156.50 1262.0,156.50 1263.0,156.50 1264.0,156.50 1265.0,156.50 1266.0,156.50 1267.0,156.50 1268.0,156.50 1269.0,156.50 1270.0,156.50 1271.0,156.50 1272.0,156.50 1273.0,156.50 1274.0,156.50 1275.0,156.50 1276.0,156.50 1277.0,156.50 1278.0,156.50 1279.0,156.50 1280.0,156.50 1281.0,156.50 1282.0,156.50 1283.0,156.50 1284.0,156.50 1285.0,156.50 1286.0,156.50 1287.0,156.50 1288.0,156.50 1289.0,156.50 1290.0,156.50 1291.0,156.50 1292.0,156.50 1293.0,156.50 1294.0,156.50 1295.0,156.50 1296.0,156.50 1297.0,156.50 1298.0,156.50 1299.0,156.50 1300.0,156.50 1301.0,156.50 1302.0,156.50 1303.0,156.50 1304.0,156.50 1305.0,156.50 1306.0,156.50 1307.0,156.50 1308.0,156.50 1309.0,156.50 1310.0,156.50 1311.0,156.50 1312.0,156.50 1313.0,156.50 1314.0,156.50 1315.0,156.50 1316.0,156.50 1317.0,156.50 1318.0,156.50 1319.0,156.50 1320.0,156.50 1321.0,156.50 1322.0,156.50 1323.0,156.50 1324.0,156.50 1325.0,156.50 1326.0,156.50 1327.0,156.50 1328.0,156.50 1329.0,156.50 1330.0,156.50 1331.0,156.50 1332.0,156.50 1333.0,156.50 1334.0,156.50 1335.0,156.50 1336.0,156.50 1337.0,156.50 1338.0,156.50 1339.0,156.50 1340.0,156.50 1341.0,156.50 1342.0,156.50 1343.0,156.50 1344.0,156.50 1345.0,156.50 1346.0,156.50 1347.0,156.50 1348.0,156.50 1349.0,156.50 1350.0,156.50 1351.0,156.50 1352.0,156.50 1353.0,156.50 1354.0,156.50 1355.0,156.50 1356.0,156.50 1357.0,156.50 1358.0,156.50 1359.0,156.50 1360.0,156.50 1361.0,156.50 1362.0,156.50 1363.0,156.50 1364.0,156.50 1365.0,156.50 1366.0,156.50 1367.0,156.50 1368.0,156.50 1369.0,156.50 1370.0,156.50 1371.0,156.50 1372.0,156.50 1373.0,156.50 1374.0,156.50 1375.0,156.50 1376.0,156.50 1377.0,156.50 1378.0,156.50 1379.0,156.50 1380.0,156.50 1381.0,156.50 1382.0,156.50 1383.0,156.50 1384.0,156.50 1385.0,156.50 1386.0,156.50 1387.0,156.50 1388.0,156.50 1389.0,156.50 1390.0,156.50 1391.0,156.50 1392.0,156.50 1393.0,156.50 1394.0,156.50 1395.0,156.50 1396.0,156.50 1397.0,156.50 1398.0,156.50 1399.0,156.50 1400.0,156.50 1401.0,156.50 1402.0,156.50 1403.0,156.50 1404.0,156.50 1405.0,156.50 1406.0,156.50 1407.0,156.50 1408.0,156.50 1409.0,156.50 1410.0,156.50 1411.0,156.50 1412.0,156.50 1413.0,156.50 1414.0,156.50 1415.0,156.50 1416.0,156.50 1417.0,156.50 1418.0,156.50 1419.0,156.50 1420.0,156.50 1421.0,157.50 1422.0,157.50 1423.0,157.50 1424.0,157.50 1425.0,157.50 1426.0,157.50 1427.0,157.50 1428.0,157.50 1429.0,157.50 1430.0,157.50 1431.0,157.50 1432.0,157.50 1433.0,157.50 1434.0,157.50 1435.0,157.50 1436.0,157.50 1437.0,157.50 1438.0,157.50 1439.0,157.50 1440.0,157.50 1441.0,157.50 1442.0,157.50 1443.0,157.50 1444.0,157.50 1445.0,157.50 1446.0,157.50 1447.0,157.50 1448.0,157.50 1449.0,157.50 1450.0,157.50 1451.0,157.50 1452.0,157.50 1453.0,157.50 1454.0,157.50 1455.0,157.50 1456.0,157.50 1457.0,157.50 1458.0,157.50 1459.0,157.50 1460.0,157.50 1461.0,157.50 1462.0,157.50 1463.0,157.50 1464.0,157.50 1465.0,157.50 1466.0,157.50 1467.0,157.50 1468.0,157.50 1469.0,157.50 1470.0,157.50 1471.0,157.50 1472.0,157.50 1473.0,157.50 1474.0,157.50 1475.0,157.50 1476.0,157.50 1477.0,157.50 1478.0,157.50 1479.0,157.50 1480.0,157.50 1481.0,157.50 1482.0,157.50 1483.0,157.50 1484.0,157.50 1485.0,157.50 1486.0,157.50 1487.0,157.50 1488.0,157.50 1489.0,157.50 1490.0,157.50 1491.0,157.50 1492.0,157.50 1493.0,157.50 1494.0,157.50 1495.0,157.50 1496.0,157.50 1497.0,157.50 1498.0,157.50 1499.0,157.50 1500.0,157.50 1501.0,157.50 1502.0,157.50 1503.0,157.50 1504.0,157.50 1505.0,157.50 1506.0,157.50 1507.0,157.50 1508.0,157.50 1509.0,157.50 1510.0,157.50 1511.0,157.50 1512.0,157.50 1513.0,157.50 1514.0,157.50 1515.0,157.50 1516.0,157.50 1517.0,157.50 1518.0,157.50 1519.0,157.50 1520.0,157.50 1521.0,157.50 1522.0,157.50 1523.0,157.50 1524.0,157.50 1525.0,157.50 1526.0,157.50 1527.0,157.50 1528.0,157.50 1529.0,157.50 1530.0,157.50 1531.0,157.50 1532.0,157.50 1533.0,157.50 1534.0,157.50 1535.0,157.50 1536.0,157.50 1537.0,157.50 1538.0,157.50 1539.0,157.50 1540.0,157.50 1541.0,157.50 1542.0,157.50 1543.0,157.50 1544.0,157.50 1545.0,157.50 1546.0,157.50 1547.0,157.50 1548.0,157.50 1549.0,157.50 1550.0,157.50 1551.0,157.50 1552.0,157.50 1553.0,157.50 1554.0,157.50 1555.0,157.50 1556.0,157.50 1557.0,157.50 1558.0,157.50 1559.0,157.50 1560.0,157.50 1561.0,157.50 1562.0,157.50 1563.0,157.50 1564.0,157.50 1565.0,157.50 1566.0,157.50 1567.0,157.50 1568.0,157.50 1569.0,157.50 1570.0,157.50 1571.0,157.50 1572.0,157.50 1573.0,157.50 1574.0,157.50 1575.0,157.50 1576.0,157.50 1577.0,157.50 1578.0,157.50 1579.0,157.50 1580.0,157.50 1581.0,157.50 1582.0,157.50 1583.0,157.50 1584.0,157.50 1585.0,157.50 1586.0,157.50 1587.0,157.50 1588.0,157.50 1589.0,157.50 1590.0,157.50 1591.0,157.50 1592.0,157.50 1593.0,157.50 1594.0,157.50 1595.0,157.50 1596.0,157.50 1597.0,157.50 1598.0,157.50 1599.0,157.50 1600.0,157.50 1601.0,157.50 1602.0,157.50 1603.0,157.50 1604.0,157.50 1605.0,157.50 1606.0,157.50 1607.0,157.50 1608.0,157.50 1609.0,157.50 1610.0,157.50 1611.0,157.50 1612.0,157.50 1613.0,157.50 1614.0,157.50 1615.0,157.50 1616.0,157.50 1617.0,157.50 1618.0,157.50 1619.0,157.50 1620.0,157.50 1621.0,157.50 1622.0,157.50 1623.0,157.50 1624.0,157.50 1625.0,157.50 1626.0,157.50 1627.0,157.50 1628.0,157.50 1629.0,157.50 1630.0,157.50 1631.0,157.50 1632.0,157.50 1633.0,157.50 1634.0,157.50 1635.0,157.50 1636.0,157.50 1637.0,157.50 1638.0,157.50 1639.0,157.50 1640.0,157.50 1641.0,157.50 1642.0,157.50 1643.0,157.50 1644.0,157.50 1645.0,157.50 1646.0,157.50 1647.0,157.50 1648.0,157.50 1649.0,157.50 1650.0,157.50 1651.0,157.50 1652.0,157.50 1653.0,157.50 1654.0,157.50 1655.0,157.50 1656.0,157.50 1657.0,157.50 1658.0,157.50 1659.0,157.50 1660.0,157.50 1661.0,157.50 1662.0,157.50 1663.0,157.50 1664.0,157.50 1665.0,157.50 1666.0,157.50 1667.0,157.50 1668.0,157.50 1669.0,157.50 1670.0,157.50 1671.0,157.50 1672.0,157.50 1673.0,157.50 1674.0,157.50 1675.0,157.50 1676.0,157.50 1677.0,157.50 1678.0,157.50 1679.0,157.50 1680.0,157.50 1681.0,157.50 1682.0,157.50 1683.0,157.50 1684.0,157.50 1685.0,157.50 1686.0,157.50 1687.0,157.50 1688.0,157.50 1689.0,157.50 1690.0,157.50 1691.0,157.50 1692.0,157.50 1693.0,157.50 1694.0,157.50 1695.0,157.50 1696.0,157.50 1697.0,157.50 1698.0,157.50 1699.0,157.50 1700.0,157.50 1701.0,157.50 1702.0,157.50 1703.0,157.50 1704.0,157.50 1705.0,157.50 1706.0,157.50 1707.0,157.50 1708.0,157.50 1709.0,157.50 1710.0,157.50 1711.0,157.50 1712.0,157.50 1713.0,157.50 1714.0,157.50 1715.0,157.50 1716.0,157.50 1717.0,157.50 1718.0,157.50 1719.0,157.50 1720.0,157.50 1721.0,157.50 1722.0,157.50 1723.0,157.50 1724.0,157.50 1725.0,157.50 1726.0,157.50 1727.0,157.50 1728.0,157.50 1729.0,157.50 1730.0,157.50 1731.0,157.50 1732.0,157.50 1733.0,157.50 1734.0,157.50 1735.0,157.50 1736.0,157.50 1737.0,157.50 1738.0,157.50 1739.0,157.50 1740.0,157.50 1741.0,157.50 1742.0,157.50 1743.0,157.50 1744.0,157.50 1745.0,157.50 1746.0,157.50 1747.0,157.50 1748.0,157.50 1749.0,157.50 1750.0,157.50 1751.0,158.50" fill="none" stroke="#000000" stroke-width="1.15" stroke-linejoin="round" clip-path="url(#sc0)"/>
<line x1="296" y1="134.37" x2="312" y2="134.37" stroke="#000" stroke-width="1.6"/>
<line x1="370" y1="133.96" x2="385" y2="133.96" stroke="#000" stroke-width="1.6"/>
<line x1="392" y1="134.14" x2="394" y2="134.14" stroke="#000" stroke-width="1.6"/>
<line x1="1150" y1="156.36" x2="1168" y2="156.36" stroke="#000" stroke-width="1.6"/>
<line x1="1408" y1="157.47" x2="1425" y2="157.47" stroke="#000" stroke-width="1.6"/>
<line x1="1688" y1="158.33" x2="1712" y2="158.33" stroke="#000" stroke-width="1.6"/>
<line x1="1716" y1="158.41" x2="1720" y2="158.41" stroke="#000" stroke-width="1.6"/>
<line x1="3" y1="245.5" x2="1751" y2="245.5" stroke="#1fc3cb" stroke-width="1" shape-rendering="crispEdges"/>
<path d="M66.5 245.4 l1.5 3 l1.5 -3 M133.5 241.8 v6 l2 -2.6" stroke="#1fc3cb" stroke-width="1" fill="none"/>
<polyline points="3.0,350.00 66.3,350.00 66.5,390.00 66.9,381.00 67.4,396.00 67.9,383.00 68.5,407.00 69.0,388.00 69.6,407.00 70.2,392.00 70.6,407.00 71.0,396.00 71.2,390.34 71.6,386.32 72.0,383.07 72.4,381.02 72.8,380.36 73.2,381.07 73.6,382.94 74.0,385.66 74.4,388.76 74.8,391.73 75.2,394.12 75.6,395.56 76.0,395.85 76.4,394.92 76.8,392.95 77.2,390.23 77.6,387.14 78.0,384.11 78.4,381.52 78.8,379.68 79.2,378.77 79.6,378.85 80.0,379.79 80.4,381.39 80.8,383.34 81.2,385.32 81.6,387.01 82.0,388.11 82.4,388.45 82.8,387.98 83.2,386.77 83.6,384.99 84.0,382.89 84.4,380.76 84.8,378.87 85.2,377.44 85.6,376.63 86.0,376.49 86.4,376.97 86.8,377.94 87.2,379.20 87.6,380.52 88.0,381.67 88.4,382.47 88.8,382.76 89.2,382.50 89.6,381.72 90.0,380.52 90.4,379.06 90.8,377.52 91.2,376.10 91.6,374.96 92.0,374.22 92.4,373.94 92.8,374.10 93.2,374.61 93.6,375.37 94.0,376.20 94.4,377.02 94.8,377.63 95.2,377.91 95.6,377.82 96.0,377.36 96.4,376.59 96.8,375.62 97.2,374.56 97.6,373.55 98.0,372.70 98.4,372.12 98.8,371.84 99.2,371.86 99.6,372.15 100.0,372.62 100.4,373.22 100.8,373.79 101.2,374.23 101.6,374.47 102.0,374.46 102.4,374.19 102.8,373.70 103.2,373.05 103.6,372.31 104.0,371.59 104.4,370.97 104.8,370.50 105.2,370.24 105.6,370.20 106.0,370.34 106.4,370.62 106.8,370.97 107.2,371.33 107.6,371.61 108.0,371.76 108.4,371.76 108.8,371.57 109.2,371.23 109.6,370.76 110.0,370.22 110.4,369.68 110.8,369.18 111.2,368.80 111.6,368.56 112.0,368.47 112.4,368.51 112.8,368.66 113.2,368.87 113.6,369.10 114.0,369.28 114.4,369.39 114.8,369.39 115.2,369.27 115.6,369.04 116.0,368.72 116.4,368.33 116.8,367.94 117.2,367.57 117.6,367.26 118.0,367.03 118.4,366.91 118.8,366.88 119.2,366.93 119.6,367.03 120.0,367.14 120.4,367.27 120.8,367.35 121.2,367.36 121.6,367.29 122.0,367.14 122.4,366.92 122.8,366.66 123.2,366.38 123.6,366.11 124.0,365.88 124.4,365.70 124.8,365.59 125.2,365.54 125.6,365.55 126.0,365.60 126.4,365.67 126.8,365.74 127.2,365.77 127.6,365.76 128.0,365.70 128.4,365.58 128.8,365.42 129.2,365.22 129.6,365.00 130.0,364.89" fill="none" stroke="#e0264a" stroke-width="1.5" stroke-linejoin="round" clip-path="url(#sc2)"/>
<polyline points="130.0,365.00 131.0,365.00 132.0,364.00 133.0,364.00 134.0,364.00 135.0,364.00 136.0,364.00 137.0,363.00 138.0,363.00 139.0,363.00 140.0,363.00 141.0,363.00 142.0,363.00 143.0,362.00 144.0,362.00 145.0,362.00 146.0,362.00 147.0,362.00 148.0,362.00 149.0,361.00 150.0,361.00 151.0,361.00 152.0,361.00 153.0,361.00 154.0,360.00 155.0,360.00 156.0,360.00 157.0,360.00 158.0,360.00 159.0,360.00 160.0,359.00 161.0,359.00 162.0,359.00 163.0,359.00 164.0,359.00 165.0,359.00 166.0,359.00 167.0,359.00 168.0,359.00 169.0,358.00 170.0,358.00 171.0,358.00 172.0,358.00 173.0,358.00 174.0,358.00 175.0,358.00 176.0,358.00 177.0,358.00 178.0,358.00 179.0,358.00 180.0,357.00 181.0,357.00 182.0,357.00 183.0,357.00 184.0,357.00 185.0,357.00 186.0,357.00 187.0,357.00 188.0,357.00 189.0,356.00 190.0,356.00 191.0,356.00 192.0,356.00 193.0,356.00 194.0,356.00 195.0,356.00 196.0,356.00 197.0,356.00 198.0,356.00 199.0,356.00 200.0,355.00 201.0,355.00 202.0,355.00 203.0,355.00 204.0,355.00 205.0,355.00 206.0,355.00 207.0,355.00 208.0,355.00 209.0,355.00 210.0,355.00 211.0,355.00 212.0,355.00 213.0,355.00 214.0,354.00 215.0,354.00 216.0,354.00 217.0,354.00 218.0,354.00 219.0,354.00 220.0,354.00 221.0,354.00 222.0,354.00 223.0,354.00 224.0,354.00 225.0,354.00 226.0,354.00 227.0,354.00 228.0,354.00 229.0,353.00 230.0,353.00 231.0,353.00 232.0,353.00 233.0,353.00 234.0,353.00 235.0,353.00 236.0,353.00 237.0,353.00 238.0,353.00 239.0,353.00 240.0,353.00 241.0,353.00 242.0,353.00 243.0,353.00 244.0,353.00 245.0,353.00 246.0,353.00 247.0,353.00 248.0,353.00 249.0,352.00 250.0,352.00 251.0,352.00 252.0,352.00 253.0,352.00 254.0,352.00 255.0,352.00 256.0,352.00 257.0,352.00 258.0,352.00 259.0,352.00 260.0,352.00 261.0,352.00 262.0,352.00 263.0,352.00 264.0,352.00 265.0,352.00 266.0,352.00 267.0,352.00 268.0,352.00 269.0,352.00 270.0,351.00 271.0,351.00 272.0,351.00 273.0,351.00 274.0,351.00 275.0,351.00 276.0,351.00 277.0,351.00 278.0,351.00 279.0,351.00 280.0,351.00 281.0,351.00 282.0,351.00 283.0,351.00 284.0,351.00 285.0,351.00 286.0,351.00 287.0,351.00 288.0,351.00 289.0,351.00 290.0,351.00 291.0,351.00 292.0,351.00 293.0,351.00 294.0,351.00 295.0,351.00 296.0,351.00 297.0,351.00 298.0,351.00 299.0,351.00 300.0,351.00 301.0,351.00 302.0,351.00 303.0,350.00 304.0,350.00 305.0,350.00 306.0,350.00 307.0,350.00 308.0,350.00 309.0,350.00 310.0,350.00 311.0,350.00 312.0,350.00 313.0,350.00 314.0,350.00 315.0,350.00 316.0,350.00 317.0,350.00 318.0,350.00 319.0,350.00 320.0,350.00 321.0,350.00 322.0,350.00 323.0,350.00 324.0,350.00 325.0,350.00 326.0,350.00 327.0,350.00 328.0,350.00 329.0,350.00 330.0,350.00 331.0,350.00 332.0,350.00 333.0,350.00 334.0,349.00 335.0,349.00 336.0,349.00 337.0,349.00 338.0,349.00 339.0,349.00 340.0,349.00 341.0,349.00 342.0,349.00 343.0,349.00 344.0,349.00 345.0,349.00 346.0,349.00 347.0,349.00 348.0,349.00 349.0,349.00 350.0,349.00 351.0,349.00 352.0,349.00 353.0,349.00 354.0,349.00 355.0,349.00 356.0,349.00 357.0,349.00 358.0,349.00 359.0,349.00 360.0,349.00 361.0,349.00 362.0,349.00 363.0,349.00 364.0,349.00 365.0,349.00 366.0,349.00 367.0,349.00 368.0,349.00 369.0,349.00 370.0,349.00 371.0,349.00 372.0,349.00 373.0,349.00 374.0,349.00 375.0,349.00 376.0,349.00 377.0,349.00 378.0,349.00 379.0,349.00 380.0,349.00 381.0,349.00 382.0,349.00 383.0,349.00 384.0,349.00 385.0,349.00 386.0,349.00 387.0,349.00 388.0,349.00 389.0,349.00 390.0,349.00 391.0,349.00 392.0,349.00 393.0,349.00 394.0,349.00 395.0,349.00 396.0,349.00 397.0,349.00 398.0,349.00 399.0,349.00 400.0,349.00 401.0,349.00 402.0,349.00 403.0,349.00 404.0,349.00 405.0,349.00 406.0,349.00 407.0,349.00 408.0,349.00 409.0,349.00 410.0,349.00 411.0,349.00 412.0,349.00 413.0,349.00 414.0,349.00 415.0,349.00 416.0,349.00 417.0,349.00 418.0,349.00 419.0,349.00 420.0,349.00 421.0,349.00 422.0,349.00 423.0,349.00 424.0,349.00 425.0,349.00 426.0,349.00 427.0,349.00 428.0,349.00 429.0,349.00 430.0,349.00 431.0,349.00 432.0,349.00 433.0,349.00 434.0,349.00 435.0,349.00 436.0,349.00 437.0,348.00 438.0,348.00 439.0,348.00 440.0,348.00 441.0,348.00 442.0,348.00 443.0,348.00 444.0,348.00 445.0,348.00 446.0,348.00 447.0,348.00 448.0,348.00 449.0,348.00 450.0,348.00 451.0,348.00 452.0,348.00 453.0,348.00 454.0,348.00 455.0,348.00 456.0,348.00 457.0,348.00 458.0,348.00 459.0,348.00 460.0,348.00 461.0,348.00 462.0,348.00 463.0,348.00 464.0,348.00 465.0,348.00 466.0,348.00 467.0,348.00 468.0,348.00 469.0,348.00 470.0,348.00 471.0,348.00 472.0,348.00 473.0,348.00 474.0,348.00 475.0,348.00 476.0,348.00 477.0,348.00 478.0,348.00 479.0,348.00 480.0,348.00 481.0,348.00 482.0,348.00 483.0,348.00 484.0,348.00 485.0,348.00 486.0,348.00 487.0,348.00 488.0,348.00 489.0,348.00 490.0,348.00 491.0,348.00 492.0,348.00 493.0,348.00 494.0,348.00 495.0,348.00 496.0,348.00 497.0,348.00 498.0,348.00 499.0,348.00 500.0,348.00 501.0,348.00 502.0,348.00 503.0,348.00 504.0,348.00 505.0,348.00 506.0,348.00 507.0,348.00 508.0,348.00 509.0,348.00 510.0,348.00 511.0,348.00 512.0,348.00 513.0,348.00 514.0,348.00 515.0,348.00 516.0,348.00 517.0,348.00 518.0,348.00 519.0,348.00 520.0,348.00 521.0,348.00 522.0,348.00 523.0,348.00 524.0,348.00 525.0,348.00 526.0,348.00 527.0,348.00 528.0,348.00 529.0,348.00 530.0,348.00 531.0,348.00 532.0,348.00 533.0,348.00 534.0,348.00 535.0,348.00 536.0,348.00 537.0,348.00 538.0,348.00 539.0,348.00 540.0,348.00 541.0,347.00 542.0,347.00 543.0,347.00 544.0,347.00 545.0,347.00 546.0,347.00 547.0,347.00 548.0,347.00 549.0,347.00 550.0,347.00 551.0,347.00 552.0,347.00 553.0,347.00 554.0,347.00 555.0,347.00 556.0,347.00 557.0,347.00 558.0,347.00 559.0,347.00 560.0,347.00 561.0,347.00 562.0,347.00 563.0,347.00 564.0,347.00 565.0,347.00 566.0,347.00 567.0,347.00 568.0,347.00 569.0,347.00 570.0,347.00 571.0,347.00 572.0,347.00 573.0,347.00 574.0,347.00 575.0,347.00 576.0,347.00 577.0,347.00 578.0,347.00 579.0,347.00 580.0,347.00 581.0,347.00 582.0,347.00 583.0,347.00 584.0,347.00 585.0,347.00 586.0,347.00 587.0,347.00 588.0,347.00 589.0,347.00 590.0,347.00 591.0,347.00 592.0,347.00 593.0,347.00 594.0,347.00 595.0,347.00 596.0,347.00 597.0,347.00 598.0,347.00 599.0,347.00 600.0,347.00 601.0,347.00 602.0,347.00 603.0,347.00 604.0,347.00 605.0,347.00 606.0,347.00 607.0,347.00 608.0,347.00 609.0,347.00 610.0,347.00 611.0,347.00 612.0,347.00 613.0,347.00 614.0,347.00 615.0,347.00 616.0,347.00 617.0,347.00 618.0,347.00 619.0,347.00 620.0,347.00 621.0,347.00 622.0,347.00 623.0,347.00 624.0,347.00 625.0,347.00 626.0,347.00 627.0,347.00 628.0,347.00 629.0,347.00 630.0,347.00 631.0,347.00 632.0,347.00 633.0,347.00 634.0,347.00 635.0,347.00 636.0,347.00 637.0,347.00 638.0,347.00 639.0,347.00 640.0,347.00 641.0,347.00 642.0,347.00 643.0,347.00 644.0,347.00 645.0,346.00 646.0,346.00 647.0,346.00 648.0,346.00 649.0,346.00 650.0,346.00 651.0,346.00 652.0,346.00 653.0,346.00 654.0,346.00 655.0,346.00 656.0,346.00 657.0,346.00 658.0,346.00 659.0,346.00 660.0,346.00 661.0,346.00 662.0,346.00 663.0,346.00 664.0,346.00 665.0,346.00 666.0,346.00 667.0,346.00 668.0,346.00 669.0,346.00 670.0,346.00 671.0,346.00 672.0,346.00 673.0,346.00 674.0,346.00 675.0,346.00 676.0,346.00 677.0,346.00 678.0,346.00 679.0,346.00 680.0,346.00 681.0,346.00 682.0,346.00 683.0,346.00 684.0,346.00 685.0,346.00 686.0,346.00 687.0,346.00 688.0,346.00 689.0,346.00 690.0,346.00 691.0,346.00 692.0,346.00 693.0,346.00 694.0,346.00 695.0,346.00 696.0,345.00 697.0,345.00 698.0,345.00 699.0,345.00 700.0,345.00 701.0,345.00 702.0,345.00 703.0,345.00 704.0,345.00 705.0,345.00 706.0,345.00 707.0,345.00 708.0,345.00 709.0,345.00 710.0,345.00 711.0,345.00 712.0,345.00 713.0,345.00 714.0,345.00 715.0,345.00 716.0,345.00 717.0,345.00 718.0,345.00 719.0,345.00 720.0,345.00 721.0,345.00 722.0,345.00 723.0,344.00 724.0,344.00 725.0,344.00 726.0,344.00 727.0,344.00 728.0,344.00 729.0,344.00 730.0,344.00 731.0,344.00 732.0,344.00 733.0,344.00 734.0,344.00 735.0,344.00 736.0,344.00 737.0,344.00 738.0,344.00 739.0,344.00 740.0,344.00 741.0,344.00 742.0,344.00 743.0,344.00 744.0,344.00 745.0,344.00 746.0,344.00 747.0,344.00 748.0,344.00 749.0,344.00 750.0,344.00 751.0,344.00 752.0,344.00 753.0,344.00 754.0,343.00 755.0,343.00 756.0,343.00 757.0,343.00 758.0,343.00 759.0,343.00 760.0,343.00 761.0,343.00 762.0,343.00 763.0,343.00 764.0,343.00 765.0,343.00 766.0,343.00 767.0,343.00 768.0,343.00 769.0,343.00 770.0,343.00 771.0,343.00 772.0,343.00 773.0,343.00 774.0,343.00 775.0,343.00 776.0,343.00 777.0,343.00 778.0,343.00 779.0,343.00 780.0,343.00 781.0,343.00 782.0,343.00 783.0,343.00 784.0,343.00 785.0,343.00 786.0,343.00 787.0,343.00 788.0,343.00 789.0,343.00 790.0,343.00 791.0,343.00 792.0,343.00 793.0,343.00 794.0,342.00 795.0,342.00 796.0,342.00 797.0,342.00 798.0,342.00 799.0,342.00 800.0,342.00 801.0,342.00 802.0,342.00 803.0,342.00 804.0,342.00 805.0,342.00 806.0,342.00 807.0,342.00 808.0,342.00 809.0,342.00 810.0,342.00 811.0,342.00 812.0,342.00 813.0,342.00 814.0,342.00 815.0,342.00 816.0,342.00 817.0,343.00 818.0,343.00 819.0,343.00 820.0,343.00 821.0,343.00 822.0,343.00 823.0,343.00 824.0,343.00 825.0,343.00 826.0,343.00 827.0,343.00 828.0,343.00 829.0,343.00 830.0,343.00 831.0,343.00 832.0,343.00 833.0,343.00 834.0,343.00 835.0,343.00 836.0,343.00 837.0,343.00 838.0,343.00 839.0,343.00 840.0,343.00 841.0,343.00 842.0,343.00 843.0,343.00 844.0,343.00 845.0,343.00 846.0,343.00 847.0,343.00 848.0,343.00 849.0,343.00 850.0,343.00 851.0,343.00 852.0,343.00 853.0,343.00 854.0,343.00 855.0,343.00 856.0,343.00 857.0,343.00 858.0,343.00 859.0,343.00 860.0,343.00 861.0,344.00 862.0,344.00 863.0,344.00 864.0,344.00 865.0,344.00 866.0,344.00 867.0,344.00 868.0,344.00 869.0,344.00 870.0,344.00 871.0,344.00 872.0,344.00 873.0,344.00 874.0,344.00 875.0,344.00 876.0,344.00 877.0,344.00 878.0,344.00 879.0,345.00 880.0,345.00 881.0,345.00 882.0,345.00 883.0,345.00 884.0,345.00 885.0,345.00 886.0,345.00 887.0,345.00 888.0,345.00 889.0,345.00 890.0,345.00 891.0,345.00 892.0,345.00 893.0,345.00 894.0,345.00 895.0,345.00 896.0,345.00 897.0,345.00 898.0,345.00 899.0,345.00 900.0,345.00 901.0,345.00 902.0,345.00 903.0,346.00 904.0,346.00 905.0,346.00 906.0,346.00 907.0,346.00 908.0,346.00 909.0,346.00 910.0,346.00 911.0,346.00 912.0,346.00 913.0,346.00 914.0,346.00 915.0,346.00 916.0,346.00 917.0,346.00 918.0,346.00 919.0,346.00 920.0,346.00 921.0,346.00 922.0,346.00 923.0,346.00 924.0,346.00 925.0,346.00 926.0,346.00 927.0,346.00 928.0,347.00 929.0,347.00 930.0,347.00 931.0,347.00 932.0,347.00 933.0,347.00 934.0,347.00 935.0,347.00 936.0,347.00 937.0,347.00 938.0,347.00 939.0,347.00 940.0,347.00 941.0,347.00 942.0,347.00 943.0,347.00 944.0,347.00 945.0,347.00 946.0,347.00 947.0,347.00 948.0,347.00 949.0,347.00 950.0,347.00 951.0,347.00 952.0,347.00 953.0,347.00 954.0,347.00 955.0,348.00 956.0,348.00 957.0,348.00 958.0,348.00 959.0,348.00 960.0,348.00 961.0,348.00 962.0,348.00 963.0,348.00 964.0,348.00 965.0,348.00 966.0,348.00 967.0,348.00 968.0,348.00 969.0,348.00 970.0,348.00 971.0,348.00 972.0,348.00 973.0,348.00 974.0,348.00 975.0,348.00 976.0,348.00 977.0,348.00 978.0,348.00 979.0,348.00 980.0,348.00 981.0,348.00 982.0,348.00 983.0,348.00 984.0,348.00 985.0,348.00 986.0,348.00 987.0,348.00 988.0,349.00 989.0,349.00 990.0,349.00 991.0,349.00 992.0,349.00 993.0,349.00 994.0,349.00 995.0,349.00 996.0,349.00 997.0,349.00 998.0,349.00 999.0,349.00 1000.0,349.00 1001.0,349.00 1002.0,349.00 1003.0,349.00 1004.0,349.00 1005.0,349.00 1006.0,349.00 1007.0,349.00 1008.0,349.00 1009.0,349.00 1010.0,349.00 1011.0,349.00 1012.0,349.00 1013.0,349.00 1014.0,349.00 1015.0,349.00 1016.0,349.00 1017.0,349.00 1018.0,349.00 1019.0,349.00 1020.0,349.00 1021.0,349.00 1022.0,349.00 1023.0,349.00 1024.0,349.00 1025.0,349.00 1026.0,349.00 1027.0,349.00 1028.0,349.00 1029.0,349.00 1030.0,349.00 1031.0,349.00 1032.0,349.00 1033.0,349.00 1034.0,349.00 1035.0,349.00 1036.0,349.00 1037.0,349.00 1038.0,349.00 1039.0,349.00 1040.0,349.00 1041.0,349.00 1042.0,349.00 1043.0,349.00 1044.0,349.00 1045.0,349.00 1046.0,349.00 1047.0,349.00 1048.0,349.00 1049.0,349.00 1050.0,349.00 1051.0,349.00 1052.0,349.00 1053.0,349.00 1054.0,349.00 1055.0,349.00 1056.0,349.00 1057.0,349.00 1058.0,349.00 1059.0,350.00 1060.0,350.00 1061.0,350.00 1062.0,350.00 1063.0,350.00 1064.0,350.00 1065.0,350.00 1066.0,350.00 1067.0,350.00 1068.0,350.00 1069.0,350.00 1070.0,350.00 1071.0,350.00 1072.0,350.00 1073.0,350.00 1074.0,350.00 1075.0,350.00 1076.0,350.00 1077.0,350.00 1078.0,350.00 1079.0,350.00 1080.0,350.00 1081.0,350.00 1082.0,350.00 1083.0,350.00 1084.0,350.00 1085.0,350.00 1086.0,350.00 1087.0,350.00 1088.0,350.00 1089.0,350.00 1090.0,350.00 1091.0,350.00 1092.0,350.00 1093.0,350.00 1094.0,350.00 1095.0,350.00 1096.0,350.00 1097.0,350.00 1098.0,350.00 1099.0,350.00 1100.0,350.00 1101.0,350.00 1102.0,350.00 1103.0,350.00 1104.0,350.00 1105.0,350.00 1106.0,350.00 1107.0,350.00 1108.0,350.00 1109.0,350.00 1110.0,350.00 1111.0,350.00 1112.0,350.00 1113.0,350.00 1114.0,350.00 1115.0,350.00 1116.0,350.00 1117.0,350.00 1118.0,350.00 1119.0,350.00 1120.0,350.00 1121.0,350.00 1122.0,350.00 1123.0,350.00 1124.0,350.00 1125.0,350.00 1126.0,350.00 1127.0,350.00 1128.0,350.00 1129.0,350.00 1130.0,350.00 1131.0,350.00 1132.0,350.00 1133.0,350.00 1134.0,350.00 1135.0,350.00 1136.0,350.00 1137.0,350.00 1138.0,350.00 1139.0,350.00 1140.0,350.00 1141.0,350.00 1142.0,350.00 1143.0,350.00 1144.0,350.00 1145.0,350.00 1146.0,350.00 1147.0,350.00 1148.0,350.00 1149.0,350.00 1150.0,350.00 1151.0,350.00 1152.0,350.00 1153.0,350.00 1154.0,350.00 1155.0,350.00 1156.0,350.00 1157.0,350.00 1158.0,350.00 1159.0,350.00 1160.0,350.00 1161.0,350.00 1162.0,350.00 1163.0,350.00 1164.0,350.00 1165.0,350.00 1166.0,350.00 1167.0,350.00 1168.0,350.00 1169.0,350.00 1170.0,350.00 1171.0,350.00 1172.0,350.00 1173.0,350.00 1174.0,350.00 1175.0,350.00 1176.0,350.00 1177.0,350.00 1178.0,350.00 1179.0,350.00 1180.0,350.00 1181.0,350.00 1182.0,350.00 1183.0,350.00 1184.0,350.00 1185.0,350.00 1186.0,350.00 1187.0,350.00 1188.0,350.00 1189.0,350.00 1190.0,350.00 1191.0,350.00 1192.0,350.00 1193.0,350.00 1194.0,350.00 1195.0,350.00 1196.0,350.00 1197.0,350.00 1198.0,350.00 1199.0,350.00 1200.0,350.00 1201.0,350.00 1202.0,350.00 1203.0,350.00 1204.0,350.00 1205.0,350.00 1206.0,350.00 1207.0,350.00 1208.0,350.00 1209.0,350.00 1210.0,350.00 1211.0,350.00 1212.0,350.00 1213.0,350.00 1214.0,350.00 1215.0,350.00 1216.0,350.00 1217.0,350.00 1218.0,350.00 1219.0,350.00 1220.0,350.00 1221.0,350.00 1222.0,350.00 1223.0,350.00 1224.0,350.00 1225.0,350.00 1226.0,350.00 1227.0,350.00 1228.0,350.00 1229.0,350.00 1230.0,350.00 1231.0,350.00 1232.0,350.00 1233.0,350.00 1234.0,350.00 1235.0,350.00 1236.0,350.00 1237.0,350.00 1238.0,350.00 1239.0,350.00 1240.0,350.00 1241.0,350.00 1242.0,350.00 1243.0,350.00 1244.0,350.00 1245.0,350.00 1246.0,350.00 1247.0,350.00 1248.0,350.00 1249.0,350.00 1250.0,350.00 1251.0,350.00 1252.0,350.00 1253.0,350.00 1254.0,350.00 1255.0,350.00 1256.0,350.00 1257.0,350.00 1258.0,350.00 1259.0,350.00 1260.0,350.00 1261.0,350.00 1262.0,350.00 1263.0,350.00 1264.0,350.00 1265.0,350.00 1266.0,350.00 1267.0,350.00 1268.0,350.00 1269.0,350.00 1270.0,350.00 1271.0,350.00 1272.0,350.00 1273.0,350.00 1274.0,350.00 1275.0,350.00 1276.0,350.00 1277.0,350.00 1278.0,350.00 1279.0,350.00 1280.0,350.00 1281.0,350.00 1282.0,350.00 1283.0,350.00 1284.0,350.00 1285.0,350.00 1286.0,350.00 1287.0,350.00 1288.0,350.00 1289.0,350.00 1290.0,350.00 1291.0,350.00 1292.0,350.00 1293.0,350.00 1294.0,350.00 1295.0,350.00 1296.0,350.00 1297.0,350.00 1298.0,350.00 1299.0,350.00 1300.0,350.00 1301.0,350.00 1302.0,350.00 1303.0,350.00 1304.0,350.00 1305.0,350.00 1306.0,350.00 1307.0,350.00 1308.0,350.00 1309.0,350.00 1310.0,350.00 1311.0,350.00 1312.0,350.00 1313.0,350.00 1314.0,350.00 1315.0,350.00 1316.0,350.00 1317.0,350.00 1318.0,350.00 1319.0,350.00 1320.0,350.00 1321.0,350.00 1322.0,350.00 1323.0,350.00 1324.0,350.00 1325.0,350.00 1326.0,350.00 1327.0,350.00 1328.0,350.00 1329.0,350.00 1330.0,350.00 1331.0,350.00 1332.0,350.00 1333.0,350.00 1334.0,350.00 1335.0,350.00 1336.0,350.00 1337.0,350.00 1338.0,350.00 1339.0,350.00 1340.0,350.00 1341.0,350.00 1342.0,350.00 1343.0,350.00 1344.0,350.00 1345.0,350.00 1346.0,350.00 1347.0,350.00 1348.0,350.00 1349.0,350.00 1350.0,350.00 1351.0,350.00 1352.0,350.00 1353.0,350.00 1354.0,350.00 1355.0,350.00 1356.0,350.00 1357.0,350.00 1358.0,350.00 1359.0,350.00 1360.0,350.00 1361.0,350.00 1362.0,350.00 1363.0,350.00 1364.0,350.00 1365.0,350.00 1366.0,350.00 1367.0,350.00 1368.0,350.00 1369.0,350.00 1370.0,350.00 1371.0,350.00 1372.0,350.00 1373.0,350.00 1374.0,350.00 1375.0,350.00 1376.0,350.00 1377.0,350.00 1378.0,350.00 1379.0,350.00 1380.0,350.00 1381.0,350.00 1382.0,350.00 1383.0,350.00 1384.0,350.00 1385.0,350.00 1386.0,350.00 1387.0,350.00 1388.0,350.00 1389.0,350.00 1390.0,350.00 1391.0,350.00 1392.0,350.00 1393.0,350.00 1394.0,350.00 1395.0,350.00 1396.0,350.00 1397.0,350.00 1398.0,350.00 1399.0,350.00 1400.0,350.00 1401.0,350.00 1402.0,350.00 1403.0,350.00 1404.0,350.00 1405.0,350.00 1406.0,350.00 1407.0,350.00 1408.0,350.00 1409.0,350.00 1410.0,350.00 1411.0,350.00 1412.0,350.00 1413.0,350.00 1414.0,350.00 1415.0,350.00 1416.0,350.00 1417.0,350.00 1418.0,350.00 1419.0,350.00 1420.0,350.00 1421.0,350.00 1422.0,350.00 1423.0,350.00 1424.0,350.00 1425.0,350.00 1426.0,350.00 1427.0,350.00 1428.0,350.00 1429.0,350.00 1430.0,350.00 1431.0,350.00 1432.0,350.00 1433.0,350.00 1434.0,350.00 1435.0,350.00 1436.0,350.00 1437.0,350.00 1438.0,350.00 1439.0,350.00 1440.0,350.00 1441.0,350.00 1442.0,350.00 1443.0,350.00 1444.0,350.00 1445.0,350.00 1446.0,350.00 1447.0,350.00 1448.0,350.00 1449.0,350.00 1450.0,350.00 1451.0,350.00 1452.0,350.00 1453.0,350.00 1454.0,350.00 1455.0,350.00 1456.0,350.00 1457.0,350.00 1458.0,350.00 1459.0,350.00 1460.0,350.00 1461.0,350.00 1462.0,350.00 1463.0,350.00 1464.0,350.00 1465.0,350.00 1466.0,350.00 1467.0,350.00 1468.0,350.00 1469.0,350.00 1470.0,350.00 1471.0,350.00 1472.0,350.00 1473.0,350.00 1474.0,350.00 1475.0,350.00 1476.0,350.00 1477.0,350.00 1478.0,350.00 1479.0,350.00 1480.0,350.00 1481.0,350.00 1482.0,350.00 1483.0,350.00 1484.0,350.00 1485.0,350.00 1486.0,350.00 1487.0,350.00 1488.0,350.00 1489.0,350.00 1490.0,350.00 1491.0,350.00 1492.0,350.00 1493.0,350.00 1494.0,350.00 1495.0,350.00 1496.0,350.00 1497.0,350.00 1498.0,350.00 1499.0,350.00 1500.0,350.00 1501.0,350.00 1502.0,350.00 1503.0,350.00 1504.0,350.00 1505.0,350.00 1506.0,350.00 1507.0,350.00 1508.0,350.00 1509.0,350.00 1510.0,350.00 1511.0,350.00 1512.0,350.00 1513.0,350.00 1514.0,350.00 1515.0,350.00 1516.0,350.00 1517.0,350.00 1518.0,350.00 1519.0,350.00 1520.0,350.00 1521.0,350.00 1522.0,350.00 1523.0,350.00 1524.0,350.00 1525.0,350.00 1526.0,350.00 1527.0,350.00 1528.0,350.00 1529.0,350.00 1530.0,350.00 1531.0,350.00 1532.0,350.00 1533.0,350.00 1534.0,350.00 1535.0,350.00 1536.0,350.00 1537.0,350.00 1538.0,350.00 1539.0,350.00 1540.0,350.00 1541.0,350.00 1542.0,350.00 1543.0,350.00 1544.0,350.00 1545.0,350.00 1546.0,350.00 1547.0,350.00 1548.0,350.00 1549.0,350.00 1550.0,350.00 1551.0,350.00 1552.0,350.00 1553.0,350.00 1554.0,350.00 1555.0,350.00 1556.0,350.00 1557.0,350.00 1558.0,350.00 1559.0,350.00 1560.0,350.00 1561.0,350.00 1562.0,350.00 1563.0,350.00 1564.0,350.00 1565.0,350.00 1566.0,350.00 1567.0,350.00 1568.0,350.00 1569.0,350.00 1570.0,350.00 1571.0,350.00 1572.0,350.00 1573.0,350.00 1574.0,350.00 1575.0,350.00 1576.0,350.00 1577.0,350.00 1578.0,350.00 1579.0,350.00 1580.0,350.00 1581.0,350.00 1582.0,350.00 1583.0,350.00 1584.0,350.00 1585.0,350.00 1586.0,350.00 1587.0,350.00 1588.0,350.00 1589.0,350.00 1590.0,350.00 1591.0,350.00 1592.0,350.00 1593.0,350.00 1594.0,350.00 1595.0,350.00 1596.0,350.00 1597.0,350.00 1598.0,350.00 1599.0,350.00 1600.0,350.00 1601.0,350.00 1602.0,350.00 1603.0,350.00 1604.0,350.00 1605.0,350.00 1606.0,350.00 1607.0,350.00 1608.0,350.00 1609.0,350.00 1610.0,350.00 1611.0,350.00 1612.0,350.00 1613.0,350.00 1614.0,350.00 1615.0,350.00 1616.0,350.00 1617.0,350.00 1618.0,350.00 1619.0,350.00 1620.0,350.00 1621.0,350.00 1622.0,350.00 1623.0,350.00 1624.0,350.00 1625.0,350.00 1626.0,350.00 1627.0,350.00 1628.0,350.00 1629.0,350.00 1630.0,350.00 1631.0,350.00 1632.0,350.00 1633.0,350.00 1634.0,350.00 1635.0,350.00 1636.0,350.00 1637.0,350.00 1638.0,350.00 1639.0,350.00 1640.0,350.00 1641.0,350.00 1642.0,350.00 1643.0,350.00 1644.0,350.00 1645.0,350.00 1646.0,350.00 1647.0,350.00 1648.0,350.00 1649.0,350.00 1650.0,350.00 1651.0,350.00 1652.0,350.00 1653.0,350.00 1654.0,350.00 1655.0,350.00 1656.0,350.00 1657.0,350.00 1658.0,350.00 1659.0,350.00 1660.0,350.00 1661.0,350.00 1662.0,350.00 1663.0,350.00 1664.0,350.00 1665.0,350.00 1666.0,350.00 1667.0,350.00 1668.0,350.00 1669.0,350.00 1670.0,350.00 1671.0,350.00 1672.0,350.00 1673.0,350.00 1674.0,350.00 1675.0,350.00 1676.0,350.00 1677.0,350.00 1678.0,350.00 1679.0,350.00 1680.0,350.00 1681.0,350.00 1682.0,350.00 1683.0,350.00 1684.0,350.00 1685.0,350.00 1686.0,350.00 1687.0,350.00 1688.0,350.00 1689.0,350.00 1690.0,350.00 1691.0,350.00 1692.0,350.00 1693.0,350.00 1694.0,350.00 1695.0,350.00 1696.0,350.00 1697.0,350.00 1698.0,350.00 1699.0,350.00 1700.0,350.00 1701.0,350.00 1702.0,350.00 1703.0,350.00 1704.0,350.00 1705.0,350.00 1706.0,350.00 1707.0,350.00 1708.0,350.00 1709.0,350.00 1710.0,350.00 1711.0,350.00 1712.0,350.00 1713.0,350.00 1714.0,350.00 1715.0,350.00 1716.0,350.00 1717.0,350.00 1718.0,350.00 1719.0,350.00 1720.0,350.00 1721.0,350.00 1722.0,350.00 1723.0,350.00 1724.0,350.00 1725.0,350.00 1726.0,350.00 1727.0,350.00 1728.0,350.00 1729.0,350.00 1730.0,350.00 1731.0,350.00 1732.0,350.00 1733.0,350.00 1734.0,350.00 1735.0,350.00 1736.0,350.00 1737.0,350.00 1738.0,350.00 1739.0,350.00 1740.0,350.00 1741.0,350.00 1742.0,350.00 1743.0,350.00 1744.0,350.00 1745.0,350.00 1746.0,350.00 1747.0,350.00 1748.0,350.00 1749.0,350.00 1750.0,350.00 1751.0,350.00" fill="none" stroke="#e0264a" stroke-width="1.9" stroke-linejoin="round" clip-path="url(#sc2)"/>
<g clip-path="url(#sc2)" fill="#e0264a" stroke="none"><rect x="133.8" y="336" width="1.2" height="53"/><path d="M133.4 346 L134.6 343 L136.2 344.5 L136.8 351 L138.2 357 L139.2 361 L137.6 364.5 L137 370 L136.2 376 L135.6 382 L134.6 383 L133.4 380 Z"/><path d="M890 337 L890.8 334.2 L892 334 L893.3 336 L893.6 341 L895 343.6 L896.2 346 L894.6 347.2 L893.6 350 L893.2 353 L892.2 358 L891 358 L890 356 Z"/></g>
<rect x="429" y="346.65" width="3" height="1.4" fill="#e0264a"/>
<rect x="437" y="346.59" width="3" height="1.4" fill="#e0264a"/>
<rect x="443" y="346.55" width="3" height="1.4" fill="#e0264a"/>
<rect x="524" y="345.76" width="3" height="1.4" fill="#e0264a"/>
<rect x="531" y="345.69" width="3" height="1.4" fill="#e0264a"/>
<rect x="536" y="345.64" width="3" height="1.4" fill="#e0264a"/>
<rect x="541" y="345.59" width="3" height="1.4" fill="#e0264a"/>
<rect x="636" y="344.74" width="3" height="1.4" fill="#e0264a"/>
<rect x="642" y="344.66" width="3" height="1.4" fill="#e0264a"/>
<rect x="648" y="344.54" width="3" height="1.4" fill="#e0264a"/>
<rect x="676" y="343.98" width="3" height="1.4" fill="#e0264a"/>
<rect x="720" y="342.70" width="3" height="1.4" fill="#e0264a"/>
<rect x="745" y="341.79" width="3" height="1.4" fill="#e0264a"/>
<rect x="790" y="340.70" width="3" height="1.4" fill="#e0264a"/>
<rect x="806" y="340.47" width="3" height="1.4" fill="#e0264a"/>
<rect x="812" y="340.54" width="3" height="1.4" fill="#e0264a"/>
<rect x="1036" y="347.30" width="3" height="1.4" fill="#e0264a"/>
<rect x="1060" y="347.62" width="3" height="1.4" fill="#e0264a"/>
<rect x="1080" y="347.86" width="3" height="1.4" fill="#e0264a"/>
<rect x="1086" y="347.93" width="3" height="1.4" fill="#e0264a"/>
<rect x="1152" y="350.30" width="3" height="1.4" fill="#e0264a"/>
<rect x="1160" y="350.30" width="3" height="1.4" fill="#e0264a"/>
<rect x="1178" y="350.30" width="3" height="1.4" fill="#e0264a"/>
<rect x="1186" y="350.30" width="3" height="1.4" fill="#e0264a"/>
<rect x="1194" y="350.30" width="3" height="1.4" fill="#e0264a"/>
<rect x="1205" y="350.30" width="3" height="1.4" fill="#e0264a"/>
<rect x="1215" y="350.30" width="3" height="1.4" fill="#e0264a"/>
<rect x="1228" y="350.30" width="3" height="1.4" fill="#e0264a"/>
<line x1="3" y1="477.5" x2="1751" y2="477.5" stroke="#7fc624" stroke-width="1" shape-rendering="crispEdges"/>
<line x1="3" y1="583.5" x2="1751" y2="583.5" stroke="#ff9524" stroke-width="1" shape-rendering="crispEdges"/>
<path d="M8 582.5h2M15 582.5h2M30 582.5h1M35 582.5h3M42 582.5h2M56 582.5h1M68 582.5h1M72 582.5h1M82 582.5h2M88 582.5h1M93 582.5h3M105 582.5h1M118 582.5h1M125 582.5h3M131 582.5h3M146 582.5h2M151 582.5h1M155 582.5h3M163 582.5h2M174 582.5h1M186 582.5h1M199 582.5h2M212 582.5h1M217 582.5h3M232 582.5h1M241 582.5h1M253 582.5h1M266 582.5h1M279 582.5h1M290 582.5h3M302 582.5h2M314 582.5h3M327 582.5h2M336 582.5h1M342 582.5h1M347 582.5h3M357 582.5h3M370 582.5h2M386 582.5h2M395 582.5h3M402 582.5h1M414 582.5h2M421 582.5h2M428 582.5h2M439 582.5h1M453 582.5h1M465 582.5h3M476 582.5h2M492 582.5h2M506 582.5h2M520 582.5h2M526 582.5h1M534 582.5h2M550 582.5h1M554 582.5h2M569 582.5h3M585 582.5h2M594 582.5h2M609 582.5h2M614 582.5h2M624 582.5h1M637 582.5h1M648 582.5h1M655 582.5h2M662 582.5h1M672 582.5h2M684 582.5h1M690 582.5h2M701 582.5h3M711 582.5h1M721 582.5h3M731 582.5h2M741 582.5h2M749 582.5h1M754 582.5h1M760 582.5h1M774 582.5h1M778 582.5h2M792 582.5h1M800 582.5h2M805 582.5h1M815 582.5h3M826 582.5h3M841 582.5h2M848 582.5h3M863 582.5h1M874 582.5h3M886 582.5h2M897 582.5h2M903 582.5h2M918 582.5h2M923 582.5h1M928 582.5h1M939 582.5h1M944 582.5h2M958 582.5h1M963 582.5h1M976 582.5h1M988 582.5h1M997 582.5h3M1003 582.5h1M1010 582.5h3M1022 582.5h1M1036 582.5h2M1046 582.5h3M1057 582.5h2M1063 582.5h1M1074 582.5h2M1086 582.5h2M1095 582.5h1M1101 582.5h1M1116 582.5h2M1132 582.5h2M1144 582.5h1M1156 582.5h1M1163 582.5h3M1174 582.5h1M1189 582.5h3M1195 582.5h3M1205 582.5h1M1220 582.5h2M1233 582.5h2M1240 582.5h2M1248 582.5h3M1262 582.5h3M1273 582.5h1M1286 582.5h1M1293 582.5h2M1309 582.5h1M1316 582.5h3M1329 582.5h2M1345 582.5h1M1349 582.5h2M1361 582.5h2M1369 582.5h3M1380 582.5h2M1396 582.5h2M1406 582.5h1M1413 582.5h1M1420 582.5h2M1428 582.5h2M1436 582.5h2M1450 582.5h3M1456 582.5h2M1471 582.5h2M1486 582.5h1M1500 582.5h1M1510 582.5h1M1521 582.5h1M1531 582.5h2M1537 582.5h2M1549 582.5h2M1565 582.5h1M1580 582.5h1M1586 582.5h1M1590 582.5h1M1603 582.5h2M1618 582.5h1M1631 582.5h3M1644 582.5h2M1651 582.5h3M1665 582.5h1M1669 582.5h1M1684 582.5h1M1696 582.5h1M1706 582.5h1M1713 582.5h1M1721 582.5h1M1729 582.5h3M1738 582.5h3" stroke="#ff9524" stroke-width="1" fill="none" shape-rendering="crispEdges" opacity="0.85"/>
<polyline points="3,862.5 630,862.5 630,861.5 1195,861.5 1195,860.5 1751,860.5" fill="none" stroke="#f0922a" stroke-width="1" shape-rendering="crispEdges"/>
<polyline points="3,743.5 55.5,743.5 55.5,653.5 1751,653.5" fill="none" stroke="#2222c4" stroke-width="1" shape-rendering="crispEdges"/>
<rect x="72" y="654" width="2.5" height="1" fill="#2222c4" opacity="0.8"/>
<rect x="76" y="654" width="2.5" height="1" fill="#2222c4" opacity="0.8"/>
<rect x="80" y="654" width="2.5" height="1" fill="#2222c4" opacity="0.8"/>
<rect x="85" y="654" width="2.5" height="1" fill="#2222c4" opacity="0.8"/>
<rect x="90" y="654" width="2.5" height="1" fill="#2222c4" opacity="0.8"/>
<rect x="106" y="654" width="2.5" height="1" fill="#2222c4" opacity="0.8"/>
<rect x="120" y="654" width="2.5" height="1" fill="#2222c4" opacity="0.8"/>
<rect x="124" y="654" width="2.5" height="1" fill="#2222c4" opacity="0.8"/>
<rect x="138" y="654" width="2.5" height="1" fill="#2222c4" opacity="0.8"/>
<rect x="197" y="654" width="2.5" height="1" fill="#2222c4" opacity="0.8"/>
<rect x="258" y="654" width="2.5" height="1" fill="#2222c4" opacity="0.8"/>
<rect x="330" y="654" width="2.5" height="1" fill="#2222c4" opacity="0.8"/>
<rect x="529" y="654" width="2.5" height="1" fill="#2222c4" opacity="0.8"/>
<rect x="700" y="654" width="2.5" height="1" fill="#2222c4" opacity="0.8"/>
<rect x="1008" y="654" width="2.5" height="1" fill="#2222c4" opacity="0.8"/>
<rect x="1115" y="654" width="2.5" height="1" fill="#2222c4" opacity="0.8"/>
<rect x="1128" y="654" width="2.5" height="1" fill="#2222c4" opacity="0.8"/>
<rect x="1294" y="654" width="2.5" height="1" fill="#2222c4" opacity="0.8"/>
<rect x="1400" y="654" width="2.5" height="1" fill="#2222c4" opacity="0.8"/>
<rect x="1440" y="654" width="2.5" height="1" fill="#2222c4" opacity="0.8"/>
<rect x="1502" y="654" width="2.5" height="1" fill="#2222c4" opacity="0.8"/>
<rect x="1590" y="654" width="2.5" height="1" fill="#2222c4" opacity="0.8"/>
<rect x="1598" y="654" width="2.5" height="1" fill="#2222c4" opacity="0.8"/>
<rect x="1604" y="654" width="2.5" height="1" fill="#2222c4" opacity="0.8"/>
<rect x="1612" y="654" width="2.5" height="1" fill="#2222c4" opacity="0.8"/>
<rect x="1620" y="654" width="2.5" height="1" fill="#2222c4" opacity="0.8"/>
<rect x="1642" y="654" width="2.5" height="1" fill="#2222c4" opacity="0.8"/>
<rect x="1654" y="654" width="2.5" height="1" fill="#2222c4" opacity="0.8"/>
<rect x="1710" y="654" width="2.5" height="1" fill="#2222c4" opacity="0.8"/>
<polyline points="3.0,922.13 3.5,922.32 4.0,922.19 4.5,922.81 5.0,922.49 5.5,922.64 6.0,922.80 6.5,923.10 7.0,922.83 7.5,923.25 8.0,923.04 8.5,923.13 9.0,923.20 9.5,922.92 10.0,923.29 10.5,923.18 11.0,923.13 11.5,923.76 12.0,923.39 12.5,923.68 13.0,923.93 13.5,923.88 14.0,923.80 14.5,924.00 15.0,924.10 15.5,924.34 16.0,923.94 16.5,924.33 17.0,924.18 17.5,924.28 18.0,924.70 18.5,924.58 19.0,924.70 19.5,924.91 20.0,925.09 20.5,924.84 21.0,925.03 21.5,925.04 22.0,925.12 22.5,925.32 23.0,925.23 23.5,925.37 24.0,925.40 24.5,925.81 25.0,925.71 25.5,925.92 26.0,926.04 26.5,925.64 27.0,925.93 27.5,926.27 28.0,926.28 28.5,925.86 29.0,925.93 29.5,926.23 30.0,926.05 30.5,926.25 31.0,926.21 31.5,926.70 32.0,926.86 32.5,927.02 33.0,926.57 33.5,927.04 34.0,927.08 34.5,926.80 35.0,927.39 35.5,927.53 36.0,927.08 36.5,927.67 37.0,927.36 37.5,927.50 38.0,927.93 38.5,927.90 39.0,927.51 39.5,927.77 40.0,927.91 40.5,927.89 41.0,927.89 41.5,928.07 42.0,928.46 42.5,928.06 43.0,928.54 43.5,928.56 44.0,928.36 44.5,928.68 45.0,928.99 45.5,929.01 46.0,928.80 46.5,929.54 47.0,929.50 47.5,929.73 48.0,929.22 48.5,929.44 49.0,929.38 49.5,930.00 50.0,929.74 50.5,929.74 51.0,930.05 51.5,930.49 52.0,930.52 52.5,930.23 53.0,930.25 53.5,930.89 54.0,930.75 54.5,930.94 55.0,930.61 55.5,930.69 56.0,931.19 56.5,931.06 57.0,930.87 57.5,931.54 58.0,931.38 58.5,931.55 59.0,931.11 59.5,931.71 60.0,931.21 60.5,931.83 61.0,931.60 61.5,931.57 62.0,931.78 62.5,932.10 63.0,931.69 63.5,931.65 64.0,931.99 64.5,931.85 65.0,931.81 65.5,931.91 66.0,931.89 66.5,946.79 67.0,949.60 67.5,952.32 68.0,953.40 68.5,955.07 69.0,956.64 69.5,956.98 70.0,956.71 70.5,955.29 71.0,953.75 71.5,951.76 72.0,950.72 72.5,949.66 73.0,949.26 73.5,950.08 74.0,951.62 74.5,952.57 75.0,954.56 75.5,955.34 76.0,955.85 76.5,955.87 77.0,954.74 77.5,953.57 78.0,952.31 78.5,951.28 79.0,949.99 79.5,950.03 80.0,950.21 80.5,950.90 81.0,951.74 81.5,952.72 82.0,953.32 82.5,953.81 83.0,953.71 83.5,953.67 84.0,952.48 84.5,951.42 85.0,950.44 85.5,950.29 86.0,950.02 86.5,949.99 87.0,950.20 87.5,950.86 88.0,951.65 88.5,952.39 89.0,952.54 89.5,952.79 90.0,952.36 90.5,952.29 91.0,951.61 91.5,950.64 92.0,949.91 92.5,950.15 93.0,949.73 93.5,950.07 94.0,950.32 94.5,951.14 95.0,951.69 95.5,952.03 96.0,951.89 96.5,951.94 97.0,951.21 97.5,950.90 98.0,950.27 98.5,950.08 99.0,949.60 99.5,949.56 100.0,949.94 100.5,950.24 101.0,950.90 101.5,951.25 102.0,951.67 102.5,951.72 103.0,951.69 103.5,951.57 104.0,950.90 104.5,950.51 105.0,950.67 105.5,949.91 106.0,950.28 106.5,950.34 107.0,950.16 107.5,951.00 108.0,951.33 108.5,951.36 109.0,951.54 109.5,951.57 110.0,950.95 110.5,950.99 111.0,950.73 111.5,950.73 112.0,950.57 112.5,950.54 113.0,950.43 113.5,950.80 114.0,950.86 114.5,951.08 115.0,950.92 115.5,950.88 116.0,950.95 116.5,951.02 117.0,950.69 117.5,951.02 118.0,950.65 118.5,950.58 119.0,950.53 119.5,950.60 120.0,950.57 121.0,950.53 122.0,951.29 123.0,951.22 124.0,950.82 125.0,950.62 126.0,950.67 127.0,950.42 128.0,951.10 129.0,950.84 130.0,950.50 131.0,950.64 132.0,950.96 133.0,950.59 134.0,951.01 135.0,951.21 136.0,950.92 137.0,950.88 138.0,950.99 139.0,951.17 140.0,951.27 141.0,951.21 142.0,951.27 143.0,950.91 144.0,951.00 145.0,951.12 146.0,951.50 147.0,951.24 148.0,951.46 149.0,951.11 150.0,951.19 151.0,951.37 152.0,951.70 153.0,951.75 154.0,951.78 155.0,951.55 156.0,951.81 157.0,951.88 158.0,951.98 159.0,951.83 160.0,952.48 161.0,952.09 162.0,952.73 163.0,952.81 164.0,952.26 165.0,952.67 166.0,953.02 167.0,953.23 168.0,952.96 169.0,952.94 170.0,953.00 171.0,953.61 172.0,953.20 173.0,953.56 174.0,953.35 175.0,953.72 176.0,954.12 177.0,953.64 178.0,954.22 179.0,954.14 180.0,954.54 181.0,954.55 182.0,954.36 183.0,954.96 184.0,954.81 185.0,954.62 186.0,954.74 187.0,955.22 188.0,955.33 189.0,955.36 190.0,955.38 191.0,955.66 192.0,955.78 193.0,956.28 194.0,955.83 195.0,956.49 196.0,956.69 197.0,956.32 198.0,957.03 199.0,957.01 200.0,957.28 201.0,956.99 202.0,957.18 203.0,957.33 204.0,957.89 205.0,957.74 206.0,957.72 207.0,957.90 208.0,957.93 209.0,957.91 210.0,958.08 211.0,958.73 212.0,958.49 213.0,959.08 214.0,958.73 215.0,958.88 216.0,959.19 217.0,959.10 218.0,959.37 219.0,959.91 220.0,960.00 221.0,960.08 222.0,960.09 223.0,960.42 224.0,960.58 225.0,960.43 226.0,960.69 227.0,960.35 228.0,960.96 229.0,960.90 230.0,961.24 231.0,961.30 232.0,961.18 233.0,961.15 234.0,961.90 235.0,961.47 236.0,961.85 237.0,961.89 238.0,961.99 239.0,962.43 240.0,962.73 241.0,962.37 242.0,962.78 243.0,962.66 244.0,962.97 245.0,962.99 246.0,962.97 247.0,963.10 248.0,963.26 249.0,963.88 250.0,963.73 251.0,963.67 252.0,964.28 253.0,964.48 254.0,964.23 255.0,964.15 256.0,964.32 257.0,964.38 258.0,964.69 259.0,964.65 260.0,964.88 261.0,965.03 262.0,965.38 263.0,965.74 264.0,965.77 265.0,965.67 266.0,965.81 267.0,966.02 268.0,966.10 269.0,966.25 270.0,966.24 271.0,966.57 272.0,967.24 273.0,966.83 274.0,967.28 275.0,967.55 276.0,967.89 277.0,967.62 278.0,967.84 279.0,968.01 280.0,968.29 281.0,968.51 282.0,969.05 283.0,969.15 284.0,969.35 285.0,968.94 286.0,969.13 287.0,969.78 288.0,970.10 289.0,969.98 290.0,970.24 291.0,970.01 292.0,970.47 293.0,971.03 294.0,971.14 295.0,971.34 296.0,971.60 297.0,971.28 298.0,971.36 299.0,971.58 300.0,972.02 301.0,972.31 302.0,972.67 303.0,972.70 304.0,972.83 305.0,973.09 306.0,973.06 307.0,973.31 308.0,973.13 309.0,973.83 310.0,973.63 311.0,974.29 312.0,974.27 313.0,974.20 314.0,974.24 315.0,974.49 316.0,974.93 317.0,975.14 318.0,974.90 319.0,975.03 320.0,975.52 321.0,975.75 322.0,975.80 323.0,975.87 324.0,976.32 325.0,976.09 326.0,976.49 327.0,976.78 328.0,977.32 329.0,977.29 330.0,977.64 331.0,977.55 332.0,977.56 333.0,977.76 334.0,978.45 335.0,978.46 336.0,978.37 337.0,978.35 338.0,978.87 339.0,979.18 340.0,979.19 341.0,979.27 342.0,979.74 343.0,980.11 344.0,979.81 345.0,979.86 346.0,980.26 347.0,980.51 348.0,980.88 349.0,980.73 350.0,981.33 351.0,981.48 352.0,981.50 353.0,981.48 354.0,982.20 355.0,981.93 356.0,982.47 357.0,982.25 358.0,982.43 359.0,982.99 360.0,982.86 361.0,983.51 362.0,983.38 363.0,983.36 364.0,983.57 365.0,983.90 366.0,984.27 367.0,984.66 368.0,984.29 369.0,984.65 370.0,984.72 371.0,985.45 372.0,985.06 373.0,985.18 374.0,985.38 375.0,985.81 376.0,986.35 377.0,986.54 378.0,986.62 379.0,987.00 380.0,987.15 381.0,986.92 382.0,987.01 383.0,987.72 384.0,987.78 385.0,987.48 386.0,988.11 387.0,988.10 388.0,988.29 389.0,988.45 390.0,988.53 391.0,988.61 392.0,988.99 393.0,989.24 394.0,989.85 395.0,989.46 396.0,990.24 397.0,989.90 398.0,990.20 399.0,990.72 400.0,990.91 401.0,990.83 402.0,990.76 403.0,991.24 404.0,991.37 405.0,991.94 406.0,991.62 407.0,991.94 408.0,992.50 409.0,992.09 410.0,992.55 411.0,993.02" fill="none" stroke="#5d1a7c" stroke-width="1.5" stroke-linejoin="round" clip-path="url(#sc7)"/>
<g shape-rendering="crispEdges">
<line x1="3" y1="161.5" x2="1718" y2="161.5" stroke="#414141" stroke-width="1" stroke-dasharray="5 5"/>
<line x1="3" y1="246.5" x2="1751" y2="246.5" stroke="#414141" stroke-width="1" stroke-dasharray="5 5"/>
<line x1="3" y1="349.5" x2="1718" y2="349.5" stroke="#414141" stroke-width="1" stroke-dasharray="5 5"/>
<line x1="3" y1="478.5" x2="1751" y2="478.5" stroke="#414141" stroke-width="1" stroke-dasharray="5 5"/>
<line x1="3" y1="583.5" x2="1718" y2="583.5" stroke="#414141" stroke-width="1" stroke-dasharray="5 5"/>
<line x1="3" y1="863.5" x2="1718" y2="863.5" stroke="#414141" stroke-width="1" stroke-dasharray="5 5"/>
<line x1="3" y1="888.5" x2="1717" y2="888.5" stroke="#414141" stroke-width="1" stroke-dasharray="5 5"/>
</g>
<g clip-path="url(#plotclip)">
<rect x="1717.1" y="86.5" width="31.0" height="12.5" fill="#fff"/>
<rect x="1717.1" y="109.6" width="31.0" height="12.5" fill="#fff"/>
<rect x="1717.1" y="132.7" width="31.0" height="12.5" fill="#fff"/>
<rect x="1724.7" y="155.8" width="23.4" height="12.5" fill="#fff"/>
<text x="1747.35" y="97.75" font-size="13.60" fill="#000" text-anchor="end">30 V</text>
<text x="1746.60" y="97.00" font-size="13.60" fill="#1a1a1a" text-anchor="end">30 V</text>
<text x="1747.35" y="120.85" font-size="13.60" fill="#000" text-anchor="end">20 V</text>
<text x="1746.60" y="120.10" font-size="13.60" fill="#1a1a1a" text-anchor="end">20 V</text>
<text x="1747.35" y="143.95" font-size="13.60" fill="#000" text-anchor="end">10 V</text>
<text x="1746.60" y="143.20" font-size="13.60" fill="#1a1a1a" text-anchor="end">10 V</text>
<text x="1747.35" y="167.05" font-size="13.60" fill="#000" text-anchor="end">0 V</text>
<text x="1746.60" y="166.30" font-size="13.60" fill="#1a1a1a" text-anchor="end">0 V</text>
<rect x="1705.8" y="183.2" width="42.3" height="12.5" fill="#fff"/>
<rect x="1698.2" y="206.2" width="49.9" height="12.5" fill="#fff"/>
<rect x="1698.2" y="229.3" width="49.9" height="12.5" fill="#fff"/>
<rect x="1693.7" y="252.4" width="54.4" height="12.5" fill="#fff"/>
<rect x="1693.7" y="275.6" width="54.4" height="12.5" fill="#fff"/>
<text x="1747.35" y="194.40" font-size="13.60" fill="#000" text-anchor="end">1.25 V</text>
<text x="1746.60" y="193.65" font-size="13.60" fill="#18b4bc" text-anchor="end">1.25 V</text>
<text x="1747.35" y="217.50" font-size="13.60" fill="#000" text-anchor="end">750 mV</text>
<text x="1746.60" y="216.75" font-size="13.60" fill="#18b4bc" text-anchor="end">750 mV</text>
<text x="1747.35" y="240.60" font-size="13.60" fill="#000" text-anchor="end">250 mV</text>
<text x="1746.60" y="239.85" font-size="13.60" fill="#18b4bc" text-anchor="end">250 mV</text>
<text x="1747.35" y="263.70" font-size="13.60" fill="#000" text-anchor="end">-250 mV</text>
<text x="1746.60" y="262.95" font-size="13.60" fill="#18b4bc" text-anchor="end">-250 mV</text>
<text x="1747.35" y="286.80" font-size="13.60" fill="#000" text-anchor="end">-750 mV</text>
<text x="1746.60" y="286.05" font-size="13.60" fill="#18b4bc" text-anchor="end">-750 mV</text>
<rect x="1698.2" y="297.9" width="49.9" height="12.5" fill="#fff"/>
<rect x="1698.2" y="321.0" width="49.9" height="12.5" fill="#fff"/>
<rect x="1724.7" y="344.1" width="23.4" height="12.5" fill="#fff"/>
<rect x="1693.7" y="367.2" width="54.4" height="12.5" fill="#fff"/>
<rect x="1693.7" y="390.3" width="54.4" height="12.5" fill="#fff"/>
<text x="1747.35" y="309.15" font-size="13.60" fill="#000" text-anchor="end">200 mV</text>
<text x="1746.60" y="308.40" font-size="13.60" fill="#d4244a" text-anchor="end">200 mV</text>
<text x="1747.35" y="332.25" font-size="13.60" fill="#000" text-anchor="end">100 mV</text>
<text x="1746.60" y="331.50" font-size="13.60" fill="#d4244a" text-anchor="end">100 mV</text>
<text x="1747.35" y="355.35" font-size="13.60" fill="#000" text-anchor="end">0 V</text>
<text x="1746.60" y="354.60" font-size="13.60" fill="#d4244a" text-anchor="end">0 V</text>
<text x="1747.35" y="378.45" font-size="13.60" fill="#000" text-anchor="end">-100 mV</text>
<text x="1746.60" y="377.70" font-size="13.60" fill="#d4244a" text-anchor="end">-100 mV</text>
<text x="1747.35" y="401.55" font-size="13.60" fill="#000" text-anchor="end">-200 mV</text>
<text x="1746.60" y="400.80" font-size="13.60" fill="#d4244a" text-anchor="end">-200 mV</text>
<rect x="1724.7" y="414.6" width="23.4" height="12.5" fill="#fff"/>
<rect x="1698.2" y="437.6" width="49.9" height="12.5" fill="#fff"/>
<rect x="1698.2" y="460.8" width="49.9" height="12.5" fill="#fff"/>
<rect x="1693.7" y="483.9" width="54.4" height="12.5" fill="#fff"/>
<rect x="1693.7" y="507.0" width="54.4" height="12.5" fill="#fff"/>
<text x="1747.35" y="425.80" font-size="13.60" fill="#000" text-anchor="end">1 V</text>
<text x="1746.60" y="425.05" font-size="13.60" fill="#74ba1e" text-anchor="end">1 V</text>
<text x="1747.35" y="448.90" font-size="13.60" fill="#000" text-anchor="end">600 mV</text>
<text x="1746.60" y="448.15" font-size="13.60" fill="#74ba1e" text-anchor="end">600 mV</text>
<text x="1747.35" y="472.00" font-size="13.60" fill="#000" text-anchor="end">200 mV</text>
<text x="1746.60" y="471.25" font-size="13.60" fill="#74ba1e" text-anchor="end">200 mV</text>
<text x="1747.35" y="495.10" font-size="13.60" fill="#000" text-anchor="end">-200 mV</text>
<text x="1746.60" y="494.35" font-size="13.60" fill="#74ba1e" text-anchor="end">-200 mV</text>
<text x="1747.35" y="518.20" font-size="13.60" fill="#000" text-anchor="end">-600 mV</text>
<text x="1746.60" y="517.45" font-size="13.60" fill="#74ba1e" text-anchor="end">-600 mV</text>
<rect x="1724.7" y="531.6" width="23.4" height="12.5" fill="#fff"/>
<rect x="1724.7" y="554.7" width="23.4" height="12.5" fill="#fff"/>
<rect x="1724.7" y="577.8" width="23.4" height="12.5" fill="#fff"/>
<rect x="1720.2" y="600.9" width="27.9" height="12.5" fill="#fff"/>
<rect x="1720.2" y="624.0" width="27.9" height="12.5" fill="#fff"/>
<text x="1747.35" y="542.85" font-size="13.60" fill="#000" text-anchor="end">4 V</text>
<text x="1746.60" y="542.10" font-size="13.60" fill="#f08a1e" text-anchor="end">4 V</text>
<text x="1747.35" y="565.95" font-size="13.60" fill="#000" text-anchor="end">2 V</text>
<text x="1746.60" y="565.20" font-size="13.60" fill="#f08a1e" text-anchor="end">2 V</text>
<text x="1747.35" y="589.05" font-size="13.60" fill="#000" text-anchor="end">0 V</text>
<text x="1746.60" y="588.30" font-size="13.60" fill="#f08a1e" text-anchor="end">0 V</text>
<text x="1747.35" y="612.15" font-size="13.60" fill="#000" text-anchor="end">-2 V</text>
<text x="1746.60" y="611.40" font-size="13.60" fill="#f08a1e" text-anchor="end">-2 V</text>
<text x="1747.35" y="635.25" font-size="13.60" fill="#000" text-anchor="end">-4 V</text>
<text x="1746.60" y="634.50" font-size="13.60" fill="#f08a1e" text-anchor="end">-4 V</text>
<rect x="1724.7" y="649.0" width="23.4" height="12.5" fill="#fff"/>
<rect x="1705.8" y="672.1" width="42.3" height="12.5" fill="#fff"/>
<rect x="1724.7" y="695.2" width="23.4" height="12.5" fill="#fff"/>
<rect x="1705.8" y="718.3" width="42.3" height="12.5" fill="#fff"/>
<rect x="1724.7" y="741.4" width="23.4" height="12.5" fill="#fff"/>
<text x="1747.35" y="660.25" font-size="13.60" fill="#000" text-anchor="end">6 V</text>
<text x="1746.60" y="659.50" font-size="13.60" fill="#2a2ab4" text-anchor="end">6 V</text>
<text x="1747.35" y="683.35" font-size="13.60" fill="#000" text-anchor="end">4.50 V</text>
<text x="1746.60" y="682.60" font-size="13.60" fill="#2a2ab4" text-anchor="end">4.50 V</text>
<text x="1747.35" y="706.45" font-size="13.60" fill="#000" text-anchor="end">3 V</text>
<text x="1746.60" y="705.70" font-size="13.60" fill="#2a2ab4" text-anchor="end">3 V</text>
<text x="1747.35" y="729.55" font-size="13.60" fill="#000" text-anchor="end">1.50 V</text>
<text x="1746.60" y="728.80" font-size="13.60" fill="#2a2ab4" text-anchor="end">1.50 V</text>
<text x="1747.35" y="752.65" font-size="13.60" fill="#000" text-anchor="end">0 V</text>
<text x="1746.60" y="751.90" font-size="13.60" fill="#2a2ab4" text-anchor="end">0 V</text>
<rect x="1680.1" y="765.4" width="68.0" height="12.5" fill="#fff"/>
<rect x="1680.1" y="788.5" width="68.0" height="12.5" fill="#fff"/>
<rect x="1687.7" y="811.6" width="60.4" height="12.5" fill="#fff"/>
<rect x="1687.7" y="834.7" width="60.4" height="12.5" fill="#fff"/>
<rect x="1725.7" y="857.8" width="22.4" height="12.5" fill="#fff"/>
<text x="1747.35" y="776.65" font-size="13.60" fill="#000" text-anchor="end">19.846 mT</text>
<text x="1746.60" y="775.90" font-size="13.60" fill="#e08a22" text-anchor="end">19.846 mT</text>
<text x="1747.35" y="799.75" font-size="13.60" fill="#000" text-anchor="end">14.884 mT</text>
<text x="1746.60" y="799.00" font-size="13.60" fill="#e08a22" text-anchor="end">14.884 mT</text>
<text x="1747.35" y="822.85" font-size="13.60" fill="#000" text-anchor="end">9.923 mT</text>
<text x="1746.60" y="822.10" font-size="13.60" fill="#e08a22" text-anchor="end">9.923 mT</text>
<text x="1747.35" y="845.95" font-size="13.60" fill="#000" text-anchor="end">4.961 mT</text>
<text x="1746.60" y="845.20" font-size="13.60" fill="#e08a22" text-anchor="end">4.961 mT</text>
<text x="1747.35" y="869.05" font-size="13.60" fill="#000" text-anchor="end">0 T</text>
<text x="1746.60" y="868.30" font-size="13.60" fill="#e08a22" text-anchor="end">0 T</text>
<rect x="1725.4" y="882.9" width="22.7" height="12.5" fill="#fff"/>
<rect x="1679.3" y="906.0" width="68.8" height="12.5" fill="#fff"/>
<rect x="1679.3" y="929.1" width="68.8" height="12.5" fill="#fff"/>
<rect x="1679.3" y="952.2" width="68.8" height="12.5" fill="#fff"/>
<rect x="1664.2" y="975.3" width="83.9" height="12.5" fill="#fff"/>
<text x="1747.35" y="894.15" font-size="13.60" fill="#000" text-anchor="end">0 A</text>
<text x="1746.60" y="893.40" font-size="13.60" fill="#5a1c78" text-anchor="end">0 A</text>
<text x="1747.35" y="917.25" font-size="13.60" fill="#000" text-anchor="end">-323.964 A</text>
<text x="1746.60" y="916.50" font-size="13.60" fill="#5a1c78" text-anchor="end">-323.964 A</text>
<text x="1747.35" y="940.35" font-size="13.60" fill="#000" text-anchor="end">-647.927 A</text>
<text x="1746.60" y="939.60" font-size="13.60" fill="#5a1c78" text-anchor="end">-647.927 A</text>
<text x="1747.35" y="963.45" font-size="13.60" fill="#000" text-anchor="end">-971.891 A</text>
<text x="1746.60" y="962.70" font-size="13.60" fill="#5a1c78" text-anchor="end">-971.891 A</text>
<text x="1747.35" y="986.55" font-size="13.60" fill="#000" text-anchor="end">-1.295855 kA</text>
<text x="1746.60" y="985.80" font-size="13.60" fill="#5a1c78" text-anchor="end">-1.295855 kA</text>
<text x="55.80" y="752.60" font-size="13.60" fill="#777" text-anchor="middle">0 s</text>
<text x="55.50" y="752.30" font-size="13.60" fill="#222" text-anchor="middle">0 s</text>
<rect x="209.0" y="742" width="42.8" height="12" fill="#fff"/>
<text x="230.70" y="752.60" font-size="13.60" fill="#777" text-anchor="middle">3.5 ms</text>
<text x="230.40" y="752.30" font-size="13.60" fill="#222" text-anchor="middle">3.5 ms</text>
<rect x="389.6" y="742" width="31.5" height="12" fill="#fff"/>
<text x="405.60" y="752.60" font-size="13.60" fill="#777" text-anchor="middle">7 ms</text>
<text x="405.30" y="752.30" font-size="13.60" fill="#222" text-anchor="middle">7 ms</text>
<rect x="555.0" y="742" width="50.4" height="12" fill="#fff"/>
<text x="580.50" y="752.60" font-size="13.60" fill="#777" text-anchor="middle">10.5 ms</text>
<text x="580.20" y="752.30" font-size="13.60" fill="#222" text-anchor="middle">10.5 ms</text>
<rect x="735.6" y="742" width="39.0" height="12" fill="#fff"/>
<text x="755.40" y="752.60" font-size="13.60" fill="#777" text-anchor="middle">14 ms</text>
<text x="755.10" y="752.30" font-size="13.60" fill="#222" text-anchor="middle">14 ms</text>
<rect x="904.8" y="742" width="50.4" height="12" fill="#fff"/>
<text x="930.30" y="752.60" font-size="13.60" fill="#777" text-anchor="middle">17.5 ms</text>
<text x="930.00" y="752.30" font-size="13.60" fill="#222" text-anchor="middle">17.5 ms</text>
<rect x="1085.4" y="742" width="39.0" height="12" fill="#fff"/>
<text x="1105.20" y="752.60" font-size="13.60" fill="#777" text-anchor="middle">21 ms</text>
<text x="1104.90" y="752.30" font-size="13.60" fill="#222" text-anchor="middle">21 ms</text>
<rect x="1254.6" y="742" width="50.4" height="12" fill="#fff"/>
<text x="1280.10" y="752.60" font-size="13.60" fill="#777" text-anchor="middle">24.5 ms</text>
<text x="1279.80" y="752.30" font-size="13.60" fill="#222" text-anchor="middle">24.5 ms</text>
<rect x="1435.2" y="742" width="39.0" height="12" fill="#fff"/>
<text x="1455.00" y="752.60" font-size="13.60" fill="#777" text-anchor="middle">28 ms</text>
<text x="1454.70" y="752.30" font-size="13.60" fill="#222" text-anchor="middle">28 ms</text>
<rect x="1604.4" y="742" width="50.4" height="12" fill="#fff"/>
<text x="1629.90" y="752.60" font-size="13.60" fill="#777" text-anchor="middle">31.5 ms</text>
<text x="1629.60" y="752.30" font-size="13.60" fill="#222" text-anchor="middle">31.5 ms</text>
</g>
<line x1="1715" y1="158" x2="1751" y2="158" stroke="#000" stroke-width="1.2"/>
<line x1="1715" y1="350" x2="1751" y2="350" stroke="#e0264a" stroke-width="2" shape-rendering="crispEdges"/>
<line x1="1715" y1="583.5" x2="1751" y2="583.5" stroke="#ff9524" stroke-width="1" shape-rendering="crispEdges"/>
<line x1="1715" y1="653.5" x2="1751" y2="653.5" stroke="#2222c4" stroke-width="1" shape-rendering="crispEdges"/>
<line x1="1715" y1="860.5" x2="1751" y2="860.5" stroke="#f0922a" stroke-width="1" shape-rendering="crispEdges"/>
<path d="M9.1 102.6 H75.8 Q77.3 102.6 78.1 103.8 L83.6 115.39999999999999 L78.1 126.99999999999999 Q77.3 128.2 75.8 128.2 H9.1 Q6.6 128.2 6.6 125.69999999999999 V105.1 Q6.6 102.6 9.1 102.6 Z" fill="#e9e9e9" stroke="none"/>
<path d="M9.1 102.6 H75.8 Q77.3 102.6 78.1 103.8 L83.6 115.39999999999999 L78.1 126.99999999999999 Q77.3 128.2 75.8 128.2 H9.1 Q6.6 128.2 6.6 125.69999999999999 V105.1 Q6.6 102.6 9.1 102.6 Z" fill="none" stroke="#1e1e1e" stroke-width="1.6" stroke-linejoin="round"/>
<line x1="32.8" y1="102.6" x2="32.8" y2="128.2" stroke="#1e1e1e" stroke-width="1.6"/>
<text x="10.80" y="119.30" font-size="12.17" fill="#222" textLength="16.60" lengthAdjust="spacingAndGlyphs">C 1</text>
<text x="45.20" y="119.30" font-size="12.17" fill="#222" textLength="24.80" lengthAdjust="spacingAndGlyphs">20 V</text>
<path d="M9.1 219.5 H75.8 Q77.3 219.5 78.1 220.7 L83.6 232.35 L78.1 244.0 Q77.3 245.2 75.8 245.2 H9.1 Q6.6 245.2 6.6 242.7 V222.0 Q6.6 219.5 9.1 219.5 Z" fill="#e6f8f9" stroke="none"/>
<path d="M9.1 219.5 H75.8 Q77.3 219.5 78.1 220.7 L83.6 232.35 L78.1 244.0 Q77.3 245.2 75.8 245.2 H9.1 Q6.6 245.2 6.6 242.7 V222.0 Q6.6 219.5 9.1 219.5 Z" fill="none" stroke="#20c4cc" stroke-width="1.6" stroke-linejoin="round"/>
<line x1="32.8" y1="219.5" x2="32.8" y2="245.2" stroke="#20c4cc" stroke-width="1.6"/>
<text x="11.00" y="236.00" font-size="12.17" fill="#111" textLength="17.40" lengthAdjust="spacingAndGlyphs">C 2</text>
<text x="36.20" y="236.00" font-size="12.17" fill="#111" textLength="41.40" lengthAdjust="spacingAndGlyphs">300 mV</text>
<g><path d="M9.1 337.6 H30.0 L42.0 350.1 L30.0 362.6 H9.1 Q6.6 362.6 6.6 360.1 V340.1 Q6.6 337.6 9.1 337.6 Z" fill="#ffe3e8" stroke="#f0607c" stroke-width="1.4" stroke-linejoin="round"/>
<text x="15.00" y="352.60" font-size="12.17" fill="#ee4466" textLength="17.30" lengthAdjust="spacingAndGlyphs">C 3</text>
</g>
<path d="M9.1 454.0 H75.8 Q77.3 454.0 78.1 455.2 L83.6 466.75 L78.1 478.3 Q77.3 479.5 75.8 479.5 H9.1 Q6.6 479.5 6.6 477.0 V456.5 Q6.6 454.0 9.1 454.0 Z" fill="#f1f8e8" stroke="none"/>
<path d="M9.1 454.0 H75.8 Q77.3 454.0 78.1 455.2 L83.6 466.75 L78.1 478.3 Q77.3 479.5 75.8 479.5 H9.1 Q6.6 479.5 6.6 477.0 V456.5 Q6.6 454.0 9.1 454.0 Z" fill="none" stroke="#86c832" stroke-width="1.6" stroke-linejoin="round"/>
<line x1="32.8" y1="454.0" x2="32.8" y2="479.5" stroke="#86c832" stroke-width="1.6"/>
<text x="10.80" y="470.10" font-size="12.17" fill="#111" textLength="17.80" lengthAdjust="spacingAndGlyphs">C 4</text>
<text x="35.80" y="470.10" font-size="12.17" fill="#111" textLength="42.00" lengthAdjust="spacingAndGlyphs">200 mV</text>
<g><path d="M9.1 571.4 H30.0 L42.0 584.0 L30.0 596.6 H9.1 Q6.6 596.6 6.6 594.1 V573.9 Q6.6 571.4 9.1 571.4 Z" fill="#fff1e6" stroke="#ff9a44" stroke-width="1.4" stroke-linejoin="round"/>
<text x="15.00" y="586.80" font-size="12.17" fill="#111" textLength="17.30" lengthAdjust="spacingAndGlyphs">C 5</text>
</g>
<path d="M9.1 687.6 H75.8 Q77.3 687.6 78.1 688.8000000000001 L83.6 700.4000000000001 L78.1 712.0 Q77.3 713.2 75.8 713.2 H9.1 Q6.6 713.2 6.6 710.7 V690.1 Q6.6 687.6 9.1 687.6 Z" fill="#e4e4f6" stroke="none"/>
<path d="M9.1 687.6 H32.8 V713.2 H9.1 Q6.6 713.2 6.6 710.7 V690.1 Q6.6 687.6 9.1 687.6 Z" fill="#2a2ac8"/>
<path d="M9.1 687.6 H75.8 Q77.3 687.6 78.1 688.8000000000001 L83.6 700.4000000000001 L78.1 712.0 Q77.3 713.2 75.8 713.2 H9.1 Q6.6 713.2 6.6 710.7 V690.1 Q6.6 687.6 9.1 687.6 Z" fill="none" stroke="#0a0a0a" stroke-width="1.6" stroke-linejoin="round"/>
<line x1="32.8" y1="687.6" x2="32.8" y2="713.2" stroke="#0a0a0a" stroke-width="1.6"/>
<text x="10.80" y="703.90" font-size="12.17" fill="#fff" textLength="17.80" lengthAdjust="spacingAndGlyphs">C 6</text>
<text x="48.00" y="703.90" font-size="12.17" fill="#2a2ac0" textLength="18.40" lengthAdjust="spacingAndGlyphs">3 V</text>
<g clip-path="url(#sc6)"><path d="M9.1 851.0 H30.0 L42.0 862.8 L30.0 874.6 H9.1 Q6.6 874.6 6.6 872.1 V853.5 Q6.6 851.0 9.1 851.0 Z" fill="#fff2e4" stroke="#f09838" stroke-width="1.4" stroke-linejoin="round"/>
<text x="13.80" y="867.00" font-size="12.17" fill="#111" textLength="20.10" lengthAdjust="spacingAndGlyphs">M 1</text>
</g>
<g clip-path="url(#sc7)"><path d="M9.1 877.2 H30.0 L42.0 888.8 L30.0 900.4 H9.1 Q6.6 900.4 6.6 897.9 V879.7 Q6.6 877.2 9.1 877.2 Z" fill="#f1e9f8" stroke="#9458b4" stroke-width="1.4" stroke-linejoin="round"/>
<text x="13.80" y="891.20" font-size="12.17" fill="#8444a6" textLength="20.10" lengthAdjust="spacingAndGlyphs">M 2</text>
</g>
<rect x="3" y="875" width="60" height="2" fill="#555555" shape-rendering="crispEdges"/>
<text x="101.80" y="120.80" font-size="19.42" fill="#0c0c0c" textLength="97.20" lengthAdjust="spacing">U_loop,coil</text>
<text x="102.45" y="238.55" font-size="19.42" fill="#0c5a5e" textLength="76.00" lengthAdjust="spacing">U_Bt,coil</text>
<text x="102.00" y="238.00" font-size="19.42" fill="#19b6be" textLength="76.00" lengthAdjust="spacing">U_Bt,coil</text>
<text x="54.45" y="355.55" font-size="19.42" fill="#6a1024" textLength="92.00" lengthAdjust="spacing">U_Rog,coil</text>
<text x="54.00" y="355.00" font-size="19.42" fill="#d8244a" textLength="92.00" lengthAdjust="spacing">U_Rog,coil</text>
<text x="102.25" y="472.15" font-size="19.42" fill="#385a0e" textLength="85.70" lengthAdjust="spacing">U_Photod</text>
<text x="101.80" y="471.60" font-size="19.42" fill="#78ba20" textLength="85.70" lengthAdjust="spacing">U_Photod</text>
<text x="54.25" y="589.75" font-size="19.42" fill="#7a440c" textLength="101.50" lengthAdjust="spacing">U_Diamagn</text>
<text x="53.80" y="589.20" font-size="19.42" fill="#f08a1e" textLength="101.50" lengthAdjust="spacing">U_Diamagn</text>
<text x="101.65" y="706.75" font-size="19.42" fill="#101058" textLength="62.80" lengthAdjust="spacing">Trigger</text>
<text x="101.20" y="706.20" font-size="19.42" fill="#2424aa" textLength="62.80" lengthAdjust="spacing">Trigger</text>
<text x="54.85" y="863.75" font-size="26.09" fill="#7a440c" textLength="38.60" lengthAdjust="spacing">B_t</text>
<text x="54.40" y="863.20" font-size="26.09" fill="#e88a20" textLength="38.60" lengthAdjust="spacing">B_t</text>
<text x="54.40" y="863.20" font-size="26.09" fill="#e88a20" textLength="38.60" lengthAdjust="spacing" stroke="#e88a20" stroke-width="0.7">B_t</text>
<text x="54.65" y="899.55" font-size="17.97" fill="#2a0c3a" textLength="24.80" lengthAdjust="spacing">I_p</text>
<text x="54.20" y="899.00" font-size="17.97" fill="#5a1c78" textLength="24.80" lengthAdjust="spacing">I_p</text>
<text x="54.20" y="899.00" font-size="17.97" fill="#5a1c78" textLength="24.80" lengthAdjust="spacing" stroke="#5a1c78" stroke-width="0.5">I_p</text>
<line x1="48" y1="349.6" x2="53" y2="349.6" stroke="#e0264a" stroke-width="1.4"/>
<path d="M45 58 H65.6 L55.3 67.8 Z" fill="#ff9422"/>
<path d="M45.4 643.8 H64.6 V664 H59 L55.4 670 L51.8 664 H45.4 Z" fill="#ff9422"/>
<path d="M47.6 645.8 H62.4 V661.6 H58 L55.4 665.6 L52.8 661.6 H47.6 Z" fill="#000"/>
<text x="55.20" y="659.60" font-size="14.50" fill="#ff9422" font-weight="bold" text-anchor="middle">T</text>
<path d="M1729.6 700.4 L1741.6 690.6 V698.9 H1751 V701.9 H1741.6 V710.2 Z" fill="#2222c4"/>
<path d="M1711.5 64.6 H1741 Q1744.6 64.6 1744.6 68.4 V97.4 Q1744.6 100.4 1742.2 98.2 L1710 67.2 Q1708.6 64.6 1711.5 64.6 Z" fill="#4e4e4e" stroke="#101010" stroke-width="1.2" stroke-linejoin="round"/>
<circle cx="1737" cy="71.5" r="3.9" fill="none" stroke="#9c9c9c" stroke-width="1.5"/>
<line x1="1733.4" y1="75.3" x2="1728" y2="80.7" stroke="#9c9c9c" stroke-width="2.7" stroke-linecap="round"/>
<text x="16.80" y="49.70" font-size="15.80" fill="#e6e6e6" textLength="124.40" lengthAdjust="spacing">Waveform View</text>
<g fill="none" stroke="#e8e8e8" stroke-width="1.3"><path d="M593 36.3 H586.6 V53 H593"/><path d="M1160.6 36.3 H1167 V53 H1160.6"/></g>
<rect x="587" y="44" width="580" height="2" fill="#b4b4b4"/>
<path d="M596 33 H611 L603.5 38.2 Z" fill="#ff9422"/>
<path d="M596.6 40.2 H610.2 V52.8 H606.2 L603.4 57 L600.6 52.8 H596.6 Z" fill="#f08c22"/>
<path d="M598 41.4 H608.8 V51.2 H605.4 L603.4 54.2 L601.4 51.2 H598 Z" fill="#000"/>
<text x="603.40" y="50.40" font-size="9.60" fill="#ff9422" font-weight="bold" text-anchor="middle">T</text>
<text x="20.30" y="18.70" font-size="15.07" fill="#f2f2f2" textLength="24.90" lengthAdjust="spacing">File</text>
<text x="86.30" y="18.70" font-size="15.07" fill="#f2f2f2" textLength="28.70" lengthAdjust="spacing">Edit</text>
<text x="155.80" y="18.70" font-size="15.07" fill="#f2f2f2" textLength="44.20" lengthAdjust="spacing">Utility</text>
<text x="241.00" y="18.70" font-size="15.07" fill="#f2f2f2" textLength="34.00" lengthAdjust="spacing">Help</text>
<text x="1785.8" y="25.3" font-size="29.5" font-weight="bold" fill="#ffffff" stroke="#ffffff" stroke-width="0.5" textLength="117.4" lengthAdjust="spacingAndGlyphs">Tektronix</text>
<path d="M1815 25.4 L1826.6 9.6 H1832 L1820.4 25.4 Z" fill="#1fb9de"/>
<rect x="1769.5" y="29.5" width="160" height="966" fill="#2e2e2e" stroke="#625b56" stroke-width="1"/>
<text x="1802.50" y="43.80" font-size="15.65" fill="#f0f0f0" font-weight="bold" textLength="84.50" lengthAdjust="spacing">Add New...</text>
<rect x="1778.5" y="54.4" width="62" height="36.4" rx="6" ry="6" fill="url(#btn)" stroke="#675f59" stroke-width="1"/>
<rect x="1850.5" y="54.4" width="62" height="36.4" rx="6" ry="6" fill="url(#btn)" stroke="#675f59" stroke-width="1"/>
<rect x="1778.5" y="100.4" width="62" height="36.4" rx="6" ry="6" fill="url(#btn)" stroke="#675f59" stroke-width="1"/>
<rect x="1850.5" y="100.4" width="62" height="36.4" rx="6" ry="6" fill="url(#btn)" stroke="#675f59" stroke-width="1"/>
<rect x="1778.5" y="146.2" width="62" height="36.4" rx="6" ry="6" fill="url(#btn)" stroke="#675f59" stroke-width="1"/>
<rect x="1850.5" y="146.2" width="62" height="36.4" rx="6" ry="6" fill="url(#btn)" stroke="#675f59" stroke-width="1"/>
<rect x="1778.5" y="196.4" width="62" height="36.4" rx="6" ry="6" fill="url(#btn)" stroke="#675f59" stroke-width="1"/>
<rect x="1850.5" y="196.4" width="62" height="36.4" rx="6" ry="6" fill="url(#btn)" stroke="#675f59" stroke-width="1"/>
<text x="1784.80" y="76.30" font-size="14.06" fill="#f4f4f4" textLength="50.60" lengthAdjust="spacing">Cursors</text>
<text x="1856.70" y="76.30" font-size="14.06" fill="#f4f4f4" textLength="49.10" lengthAdjust="spacing">Callout</text>
<text x="1780.20" y="122.50" font-size="14.06" fill="#f4f4f4" textLength="58.60" lengthAdjust="spacing">Measure</text>
<text x="1858.30" y="122.50" font-size="14.06" fill="#f4f4f4" textLength="45.70" lengthAdjust="spacing">Search</text>
<text x="1785.60" y="160.30" font-size="14.06" fill="#f4f4f4" textLength="47.40" lengthAdjust="spacing">Results</text>
<text x="1792.20" y="176.70" font-size="14.06" fill="#f4f4f4" textLength="34.80" lengthAdjust="spacing">Table</text>
<text x="1867.20" y="168.90" font-size="14.06" fill="#f4f4f4" textLength="28.30" lengthAdjust="spacing">Plot</text>
<text x="1856.60" y="218.90" font-size="14.06" fill="#f4f4f4" textLength="49.40" lengthAdjust="spacing">More...</text>
<rect x="1773" y="189" width="144" height="1" fill="#5a524d"/>
<rect x="1773" y="240.5" width="144" height="1" fill="#5a524d"/>
<rect x="1798" y="203" width="22" height="19" fill="none" stroke="#9a9a9a" stroke-width="2" stroke-dasharray="3.4 2.6"/>
<circle cx="1811" cy="209.4" r="4.6" fill="#2f2f2f" stroke="#bdbdbd" stroke-width="1.5"/>
<line x1="1807.4" y1="213.2" x2="1803" y2="217.4" stroke="#9a9a9a" stroke-width="2.6" stroke-linecap="round"/>
<path d="M1815.2 217 L1815.9 226.4 L1818.1 224.3 L1820.1 227.6 L1821.7 226.7 L1819.8 223.5 L1823 223 Z" fill="#b4b4b4" stroke="#2f2f2f" stroke-width="0.5"/>
<circle cx="1761.8" cy="504" r="2" fill="#c8c8c8"/>
<circle cx="1761.8" cy="512.5" r="2" fill="#c8c8c8"/>
<circle cx="1761.8" cy="521" r="2" fill="#c8c8c8"/>
<path d="M3 1003.5 V988.2 Q3 984.2 7 984.2 H89 Q93 984.2 93 988.2 V1003.5 Z" fill="#1e1e1e"/>
<rect x="3" y="1003" width="90" height="2.2" fill="#b9b9b9"/>
<rect x="3" y="1005" width="90" height="17" fill="#ff0000"/>
<path d="M3 1022 H93 V1074.5 Q93 1079 88.5 1079 H7.5 Q3 1079 3 1074.5 Z" fill="#c9c9c9"/>
<text x="8.50" y="997.60" font-size="14.06" fill="#f2e63a" textLength="28.40" lengthAdjust="spacing">Ch 1</text>
<path d="M11.2 1007 L18.8 1021 H3.6 Z" fill="#f6ee16" stroke="#4a3c50" stroke-width="0.9" stroke-linejoin="round"/>
<rect x="10.6" y="1011.2" width="1.3" height="6" fill="#6a5a20"/><rect x="10.6" y="1018" width="1.3" height="1.4" fill="#6a5a20"/>
<text x="19.50" y="1017.60" font-size="13.77" fill="#ffffff" textLength="57.00" lengthAdjust="spacing">Clipping</text>
<text x="8.50" y="1036.30" font-size="14.06" fill="#111" textLength="43.40" lengthAdjust="spacing">5 V/div</text>
<text x="9.40" y="1055.60" font-size="14.06" fill="#111" textLength="34.60" lengthAdjust="spacing">1 MΩ</text>
<text x="8.50" y="1074.40" font-size="14.06" fill="#111" textLength="52.50" lengthAdjust="spacing">200 kHz</text>
<text x="74.60" y="1068.60" font-size="8.60" fill="#111">B</text>
<text x="80.00" y="1071.40" font-size="8.60" fill="#111">w</text>
<path d="M98 1022.5 V1007 Q98 1003 102 1003 H184 Q188 1003 188 1007 V1022.5 Z" fill="#20444a"/>
<path d="M98 1022 H188 V1074.5 Q188 1079 183.5 1079 H102.5 Q98 1079 98 1074.5 Z" fill="#c9c9c9"/>
<text x="103.50" y="1017.00" font-size="14.06" fill="#20d0d8" textLength="30.00" lengthAdjust="spacing">Ch 2</text>
<text x="103.50" y="1036.30" font-size="14.06" fill="#111" textLength="73.20" lengthAdjust="spacing">250 mV/div</text>
<text x="104.40" y="1055.60" font-size="14.06" fill="#111" textLength="34.60" lengthAdjust="spacing">1 MΩ</text>
<text x="103.50" y="1074.40" font-size="14.06" fill="#111" textLength="52.50" lengthAdjust="spacing">200 kHz</text>
<text x="169.60" y="1068.60" font-size="8.60" fill="#111">B</text>
<text x="175.00" y="1071.40" font-size="8.60" fill="#111">w</text>
<path d="M193 1022.5 V1007 Q193 1003 197 1003 H279 Q283 1003 283 1007 V1022.5 Z" fill="#48242a"/>
<path d="M193 1022 H283 V1074.5 Q283 1079 278.5 1079 H197.5 Q193 1079 193 1074.5 Z" fill="#c9c9c9"/>
<text x="198.50" y="1017.00" font-size="14.06" fill="#ffffff" textLength="29.40" lengthAdjust="spacing">Ch 3</text>
<text x="198.50" y="1036.30" font-size="14.06" fill="#111" textLength="64.40" lengthAdjust="spacing">50 mV/div</text>
<text x="199.40" y="1055.60" font-size="14.06" fill="#111" textLength="34.60" lengthAdjust="spacing">1 MΩ</text>
<text x="198.50" y="1074.40" font-size="14.06" fill="#111" textLength="52.50" lengthAdjust="spacing">200 kHz</text>
<text x="264.60" y="1068.60" font-size="8.60" fill="#111">B</text>
<text x="270.00" y="1071.40" font-size="8.60" fill="#111">w</text>
<path d="M288 1022.5 V1007 Q288 1003 292 1003 H374 Q378 1003 378 1007 V1022.5 Z" fill="#364024"/>
<path d="M288 1022 H378 V1074.5 Q378 1079 373.5 1079 H292.5 Q288 1079 288 1074.5 Z" fill="#c9c9c9"/>
<text x="293.50" y="1017.00" font-size="14.06" fill="#96d820" textLength="30.00" lengthAdjust="spacing">Ch 4</text>
<text x="293.50" y="1036.30" font-size="14.06" fill="#111" textLength="72.80" lengthAdjust="spacing">200 mV/div</text>
<text x="294.40" y="1055.60" font-size="14.06" fill="#111" textLength="34.60" lengthAdjust="spacing">1 MΩ</text>
<text x="293.50" y="1074.40" font-size="14.06" fill="#111" textLength="52.50" lengthAdjust="spacing">200 kHz</text>
<text x="359.60" y="1068.60" font-size="8.60" fill="#111">B</text>
<text x="365.00" y="1071.40" font-size="8.60" fill="#111">w</text>
<path d="M383 1022.5 V1007 Q383 1003 387 1003 H469 Q473 1003 473 1007 V1022.5 Z" fill="#4a3420"/>
<path d="M383 1022 H473 V1074.5 Q473 1079 468.5 1079 H387.5 Q383 1079 383 1074.5 Z" fill="#c9c9c9"/>
<text x="388.50" y="1017.00" font-size="14.06" fill="#ff9828" textLength="29.40" lengthAdjust="spacing">Ch 5</text>
<text x="388.50" y="1036.30" font-size="14.06" fill="#111" textLength="42.20" lengthAdjust="spacing">1 V/div</text>
<text x="389.40" y="1055.60" font-size="14.06" fill="#111" textLength="34.60" lengthAdjust="spacing">1 MΩ</text>
<text x="388.50" y="1074.40" font-size="14.06" fill="#111" textLength="52.50" lengthAdjust="spacing">200 kHz</text>
<text x="454.60" y="1068.60" font-size="8.60" fill="#111">B</text>
<text x="460.00" y="1071.40" font-size="8.60" fill="#111">w</text>
<path d="M478 1022.5 V1007 Q478 1003 482 1003 H564 Q568 1003 568 1007 V1022.5 Z" fill="#2626c2"/>
<path d="M478 1022 H568 V1074.5 Q568 1079 563.5 1079 H482.5 Q478 1079 478 1074.5 Z" fill="#c9c9c9"/>
<text x="483.50" y="1017.00" font-size="14.06" fill="#ffffff" textLength="29.40" lengthAdjust="spacing">Ch 6</text>
<text x="483.50" y="1036.30" font-size="14.06" fill="#111" textLength="72.20" lengthAdjust="spacing">750 mV/div</text>
<text x="484.40" y="1055.60" font-size="14.06" fill="#111" textLength="34.60" lengthAdjust="spacing">1 MΩ</text>
<text x="483.50" y="1074.40" font-size="14.06" fill="#111" textLength="52.50" lengthAdjust="spacing">200 kHz</text>
<text x="549.60" y="1068.60" font-size="8.60" fill="#111">B</text>
<text x="555.00" y="1071.40" font-size="8.60" fill="#111">w</text>
<path d="M573 1003.5 V988.2 Q573 984.2 577 984.2 H659 Q663 984.2 663 988.2 V1003.5 Z" fill="#443020"/>
<rect x="573" y="1003" width="90" height="2.2" fill="#b9b9b9"/>
<rect x="573" y="1005" width="90" height="16.6" fill="#ff0000"/>
<path d="M573 1021.6 H663 V1074.5 Q663 1079.0 658.5 1079.0 H577.5 Q573 1079.0 573 1074.5 Z" fill="#c9c9c9"/>
<text x="578.60" y="998.00" font-size="14.06" fill="#f0922a" textLength="47.60" lengthAdjust="spacing">Math 1</text>
<path d="M581.2 1006.6 L588.8000000000001 1020.6 H573.6 Z" fill="#f6ee16" stroke="#4a3c50" stroke-width="0.9" stroke-linejoin="round"/>
<rect x="580.6" y="1010.8000000000001" width="1.3" height="6" fill="#6a5a20"/><rect x="580.6" y="1017.6" width="1.3" height="1.4" fill="#6a5a20"/>
<text x="589.50" y="1017.50" font-size="13.77" fill="#ffffff" textLength="65.50" lengthAdjust="spacing">Empty i...</text>
<text x="578.60" y="1036.60" font-size="14.06" fill="#000" font-weight="bold" textLength="81.20" lengthAdjust="spacing">2.48 mT/div</text>
<text x="578.60" y="1055.80" font-size="14.06" fill="#111" textLength="72.40" lengthAdjust="spacing">Intg(Ch2)…</text>
<path d="M668 1003.5 V988.2 Q668 984.2 672 984.2 H754 Q758 984.2 758 988.2 V1003.5 Z" fill="#2a2030"/>
<rect x="668" y="1003" width="90" height="2.2" fill="#b9b9b9"/>
<rect x="668" y="1005" width="90" height="16.6" fill="#ff0000"/>
<path d="M668 1021.6 H758 V1074.5 Q758 1079.0 753.5 1079.0 H672.5 Q668 1079.0 668 1074.5 Z" fill="#c9c9c9"/>
<text x="673.60" y="998.00" font-size="14.06" fill="#ffffff" textLength="47.60" lengthAdjust="spacing">Math 2</text>
<path d="M676.2 1006.6 L683.8000000000001 1020.6 H668.6 Z" fill="#f6ee16" stroke="#4a3c50" stroke-width="0.9" stroke-linejoin="round"/>
<rect x="675.6" y="1010.8000000000001" width="1.3" height="6" fill="#6a5a20"/><rect x="675.6" y="1017.6" width="1.3" height="1.4" fill="#6a5a20"/>
<text x="684.50" y="1017.50" font-size="13.77" fill="#ffffff" textLength="65.50" lengthAdjust="spacing">Empty i...</text>
<text x="673.60" y="1036.60" font-size="14.06" fill="#000" font-weight="bold" textLength="78.80" lengthAdjust="spacing">161.98 A/…</text>
<text x="673.60" y="1055.80" font-size="14.06" fill="#111" textLength="73.00" lengthAdjust="spacing">-Intg(Ch3…</text>
<rect x="1118.0" y="1000" width="1" height="77" fill="#5a524d"/>
<rect x="1269.0" y="1000" width="1" height="77" fill="#5a524d"/>
<rect x="1811.0" y="1000" width="1" height="77" fill="#5a524d"/>
<rect x="1129.5" y="999.5" width="39.2" height="79" rx="6" ry="6" fill="url(#btn)" stroke="#675f59" stroke-width="1"/>
<rect x="1133.3" y="1007" width="31.6" height="2" fill="#c42424"/>
<text x="1135.80" y="1032.20" font-size="14.78" fill="#f4f4f4" textLength="26.60" lengthAdjust="spacing">Add</text>
<text x="1134.50" y="1048.60" font-size="14.78" fill="#f4f4f4" textLength="29.20" lengthAdjust="spacing">New</text>
<text x="1132.60" y="1064.80" font-size="14.78" fill="#f4f4f4" textLength="33.00" lengthAdjust="spacing">Math</text>
<rect x="1174.5" y="999.5" width="39.2" height="79" rx="6" ry="6" fill="url(#btn)" stroke="#675f59" stroke-width="1"/>
<rect x="1178.3" y="1007" width="31.6" height="2" fill="#c4c8dc"/>
<text x="1180.80" y="1032.20" font-size="14.78" fill="#f4f4f4" textLength="26.60" lengthAdjust="spacing">Add</text>
<text x="1179.50" y="1048.60" font-size="14.78" fill="#f4f4f4" textLength="29.20" lengthAdjust="spacing">New</text>
<text x="1184.10" y="1064.80" font-size="14.78" fill="#f4f4f4" textLength="20.00" lengthAdjust="spacing">Ref</text>
<rect x="1219.5" y="999.5" width="39.2" height="79" rx="6" ry="6" fill="url(#btn)" stroke="#675f59" stroke-width="1"/>
<rect x="1223.3" y="1007" width="31.6" height="2" fill="#c658ff"/>
<text x="1225.80" y="1032.20" font-size="14.78" fill="#f4f4f4" textLength="26.60" lengthAdjust="spacing">Add</text>
<text x="1224.50" y="1048.60" font-size="14.78" fill="#f4f4f4" textLength="29.20" lengthAdjust="spacing">New</text>
<text x="1228.10" y="1064.80" font-size="14.78" fill="#f4f4f4" textLength="22.00" lengthAdjust="spacing">Bus</text>
<rect x="1280.6" y="1003.5" width="198.2" height="75" rx="4.5" ry="4.5" fill="#c9c9c9" stroke="#141414" stroke-width="1.2"/>
<path d="M1281.1999999999998 1022.6 V1008 Q1281.1999999999998 1004.1 1285.1999999999998 1004.1 H1474.2 Q1478.2 1004.1 1478.2 1008 V1022.6 Z" fill="#58595b"/>
<text x="1286.20" y="1017.60" font-size="15.07" fill="#f4f4f4" textLength="73.20" lengthAdjust="spacing">Horizontal</text>
<text x="1285.80" y="1036.70" font-size="14.06" fill="#111" textLength="65.00" lengthAdjust="spacing">3.5 ms/div</text>
<text x="1391.60" y="1036.70" font-size="14.06" fill="#111" textLength="38.40" lengthAdjust="spacing">35 ms</text>
<text x="1285.80" y="1055.60" font-size="14.06" fill="#111" textLength="66.50" lengthAdjust="spacing">SR: 1 MS/s</text>
<text x="1392.50" y="1055.60" font-size="14.06" fill="#111" textLength="42.50" lengthAdjust="spacing">1 µs/pt</text>
<text x="1285.80" y="1074.40" font-size="14.06" fill="#111" textLength="69.50" lengthAdjust="spacing">RL: 35 kpts</text>
<text x="1405.80" y="1074.40" font-size="14.06" fill="#111" textLength="21.20" lengthAdjust="spacing">3%</text>
<path d="M1391.4 1063 H1400 V1072 H1397.4 L1395.7 1075 L1394 1072 H1391.4 Z" fill="#f08c22"/>
<rect x="1392.6" y="1064.2" width="6.2" height="6.6" fill="#000"/>
<text x="1395.70" y="1070.40" font-size="6.60" fill="#ffffff" font-weight="bold" text-anchor="middle">T</text>
<rect x="1485.8" y="1003.5" width="158.4" height="75" rx="4.5" ry="4.5" fill="#c9c9c9" stroke="#141414" stroke-width="1.2"/>
<path d="M1486.3999999999999 1022.6 V1008 Q1486.3999999999999 1004.1 1490.3999999999999 1004.1 H1639.6000000000001 Q1643.6000000000001 1004.1 1643.6000000000001 1008 V1022.6 Z" fill="#58595b"/>
<text x="1491.40" y="1017.60" font-size="15.07" fill="#f4f4f4" textLength="48.40" lengthAdjust="spacing">Trigger</text>
<rect x="1490.6" y="1025.8" width="29" height="14.6" rx="4.5" ry="4.5" fill="#2626c2" stroke="#0c0c0c" stroke-width="1.2"/>
<text x="1505.00" y="1037.00" font-size="14.00" fill="#ffffff" text-anchor="middle">6</text>
<path d="M1530.2 1038.6 H1534.6 L1541.4 1028 H1546" fill="none" stroke="#4848a8" stroke-width="1.1"/>
<text x="1556.40" y="1036.70" font-size="14.06" fill="#111" textLength="20.60" lengthAdjust="spacing">3 V</text>
<rect x="1650.8" y="1003.5" width="148.4" height="75" rx="4.5" ry="4.5" fill="#c9c9c9" stroke="#141414" stroke-width="1.2"/>
<path d="M1651.3999999999999 1022.6 V1008 Q1651.3999999999999 1004.1 1655.3999999999999 1004.1 H1794.6000000000001 Q1798.6000000000001 1004.1 1798.6000000000001 1008 V1022.6 Z" fill="#58595b"/>
<text x="1656.40" y="1017.60" font-size="15.07" fill="#f4f4f4" textLength="77.20" lengthAdjust="spacing">Acquisition</text>
<text x="1655.80" y="1036.70" font-size="14.06" fill="#111" textLength="50.50" lengthAdjust="spacing">Manual,</text>
<text x="1736.50" y="1036.70" font-size="14.06" fill="#111" textLength="48.80" lengthAdjust="spacing">Analyze</text>
<text x="1655.80" y="1055.30" font-size="14.06" fill="#111" textLength="106.40" lengthAdjust="spacing">High Res: 16 bits</text>
<text x="1655.80" y="1074.40" font-size="14.06" fill="#111" textLength="69.40" lengthAdjust="spacing">Single: 1 /1</text>
<rect x="1822.6" y="999.8" width="88.8" height="34.4" rx="6" ry="6" fill="#ff2029" stroke="#7a5a5a" stroke-width="1"/>
<text x="1839.20" y="1019.70" font-size="13.62" fill="#ffffff" font-weight="bold" textLength="55.40" lengthAdjust="spacing">Stopped</text>
<rect x="1822.6" y="1041" width="88.8" height="37.2" rx="4.5" ry="4.5" fill="#c9c9c9"/>
<text x="1826.80" y="1054.50" font-size="14.64" fill="#111" textLength="79.90" lengthAdjust="spacing">23 Oct 2025</text>
<text x="1825.60" y="1071.90" font-size="14.64" fill="#111" textLength="83.90" lengthAdjust="spacing">11:44:39 AM</text>
</svg></body></html>
